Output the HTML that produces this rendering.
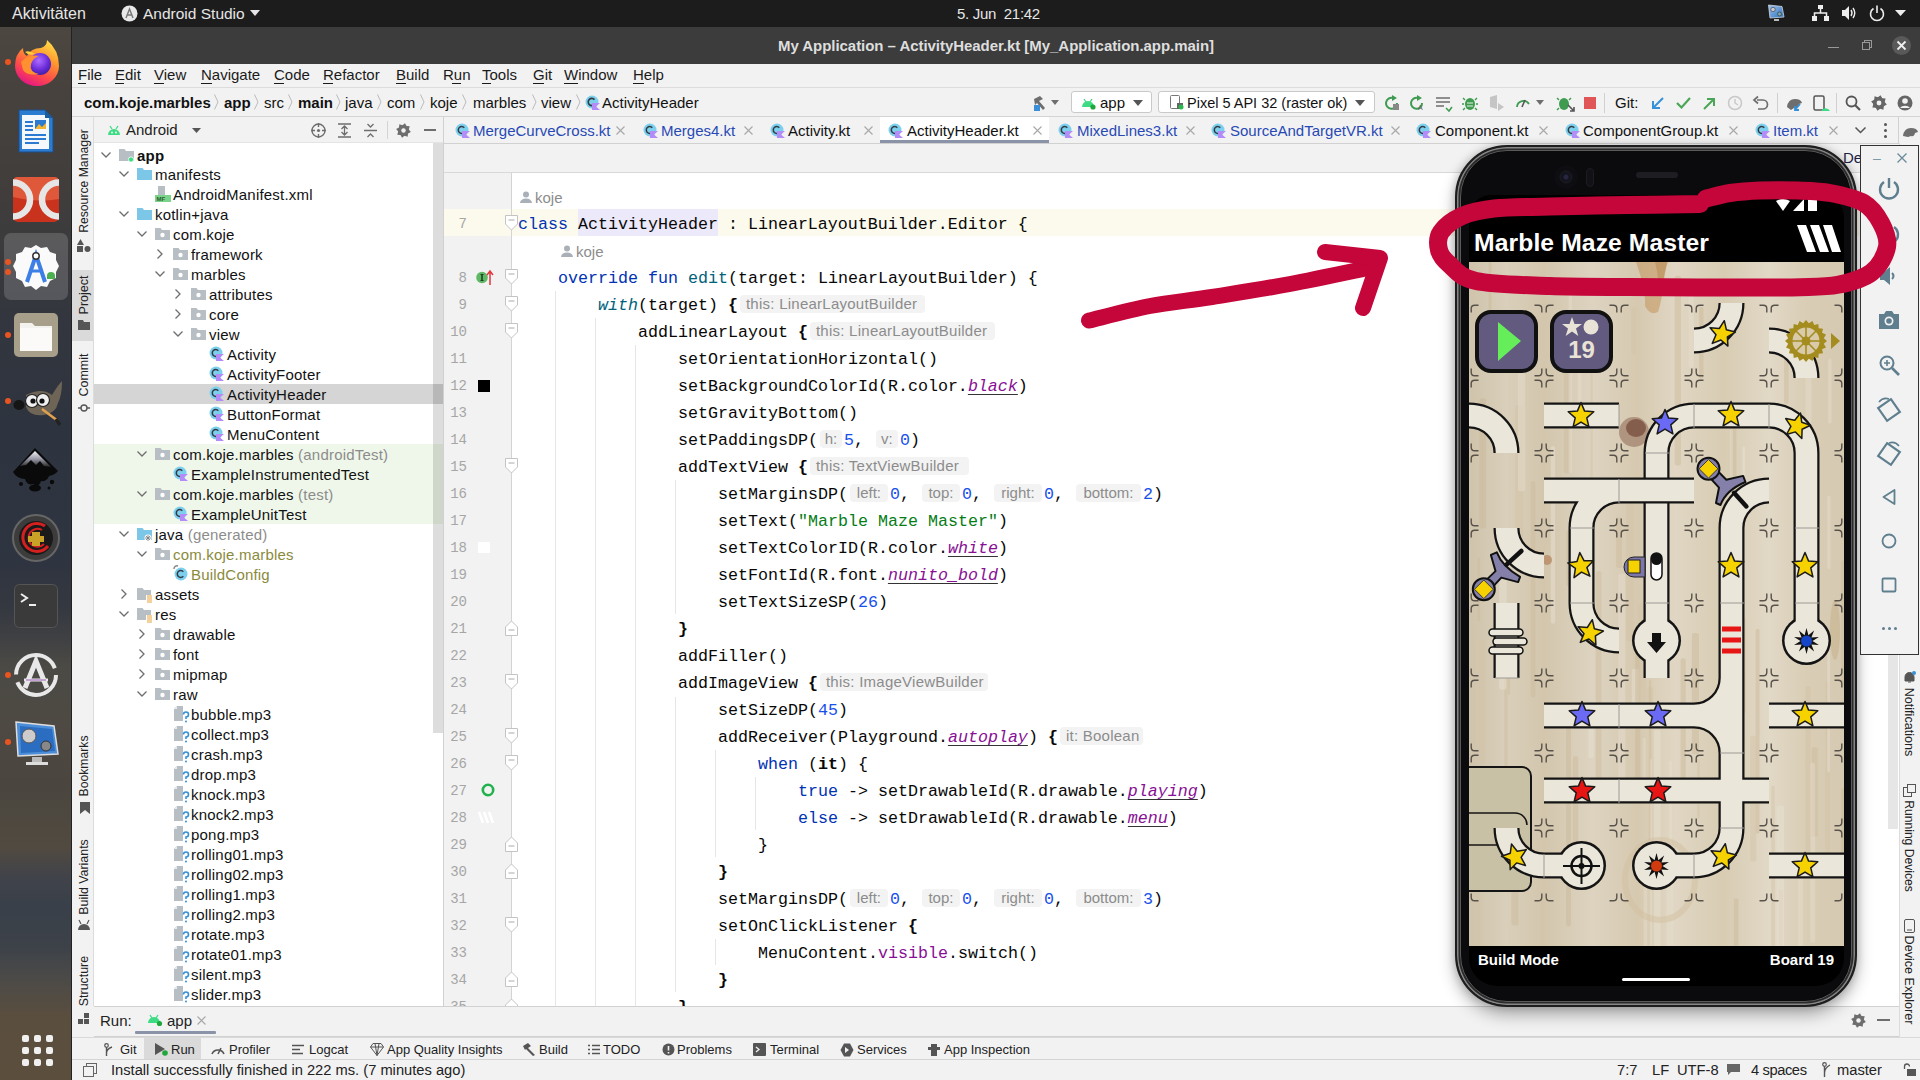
<!DOCTYPE html><html><head><meta charset="utf-8"><style>
html,body{margin:0;padding:0;width:1920px;height:1080px;overflow:hidden;background:#f2f2f2;position:relative;font-family:"Liberation Sans",sans-serif}
div{box-sizing:border-box}
svg{overflow:visible}
</style></head><body>
<div style="position:absolute;left:0px;top:0px;width:1920px;height:27px;background:#1c1c1c"></div>
<div style="position:absolute;left:12px;top:3.5px;height:20px;line-height:20px;font-family:'Liberation Sans', sans-serif;font-size:16px;color:#e6e6e6;font-weight:400;white-space:pre;">Aktivitäten</div>
<svg style="position:absolute;left:121px;top:5px;" width="17" height="17" viewBox="0 0 17 17"><circle cx="8.5" cy="8.5" r="8" fill="#e8e8e8"/><path d="M5 13 L8.5 4 L12 13 M6.3 10 H10.7" stroke="#777" stroke-width="1.4" fill="none"/></svg>
<div style="position:absolute;left:143px;top:3.5px;height:20px;line-height:20px;font-family:'Liberation Sans', sans-serif;font-size:15.5px;color:#e6e6e6;font-weight:400;white-space:pre;">Android Studio</div>
<svg style="position:absolute;left:250px;top:10px;" width="10" height="6" viewBox="0 0 10 6"><path d="M0 0 H10 L5 6 Z" fill="#e6e6e6"/></svg>
<div style="position:absolute;left:957px;top:3.5px;height:20px;line-height:20px;font-family:'Liberation Sans', sans-serif;font-size:15px;color:#e6e6e6;font-weight:400;white-space:pre;letter-spacing:-0.3px">5. Jun  21:42</div>
<svg style="position:absolute;left:1768px;top:4px;" width="17" height="18" viewBox="0 0 17 18"><defs><linearGradient id="tr1" x1="0" y1="0" x2="1" y2="1"><stop offset="0" stop-color="#9cc4ee"/><stop offset="1" stop-color="#2f6fc0"/></linearGradient></defs><path d="M0.5 1 L14 2.5 L16 13 L2 14 Z" fill="url(#tr1)" stroke="#cfd8e0" stroke-width="0.8"/><circle cx="5" cy="5.5" r="2.2" fill="#ccc" stroke="#333" stroke-width="0.6"/><circle cx="11.5" cy="10" r="2" fill="#7aa" stroke="#333" stroke-width="0.6"/><rect x="6" y="15" width="5" height="2" fill="#bbb"/></svg>
<svg style="position:absolute;left:1812px;top:5px;" width="17" height="16" viewBox="0 0 17 16"><rect x="6" y="0" width="5" height="4" fill="#eee"/><rect x="0" y="11" width="5" height="5" fill="#eee"/><rect x="12" y="11" width="5" height="5" fill="#eee"/><path d="M8.5 4 V8 M2.5 11 V8 H14.5 V11" stroke="#eee" stroke-width="1.5" fill="none"/></svg>
<svg style="position:absolute;left:1841px;top:5px;" width="16" height="16" viewBox="0 0 16 16"><path d="M1 5 H4 L8 1 V15 L4 11 H1 Z" fill="#eee"/><path d="M10 5 Q12 8 10 11 M12 3 Q15.5 8 12 13" stroke="#eee" stroke-width="1.4" fill="none"/></svg>
<svg style="position:absolute;left:1869px;top:5px;" width="16" height="16" viewBox="0 0 16 16"><path d="M4.5 3.5 A6.5 6.5 0 1 0 11.5 3.5" stroke="#eee" stroke-width="1.6" fill="none"/><path d="M8 0.5 V8" stroke="#eee" stroke-width="1.6"/></svg>
<svg style="position:absolute;left:1895px;top:10px;" width="11" height="6" viewBox="0 0 11 6"><path d="M0 0 H11 L5.5 6 Z" fill="#eee"/></svg>
<div style="position:absolute;left:0px;top:27px;width:72px;height:1053px;background:linear-gradient(180deg,#4d4741 0px,#47423d 60px,#403d3c 170px,#3a3a3d 230px,#33363e 290px,#2e343f 400px,#2e3440 530px,#343840 580px,#3f4043 610px,#4b4a45 640px,#4e4a43 700px,#4a463f 760px,#514a40 820px,#41434a 850px,#394049 880px,#3d4249 920px,#4b4a48 950px,#5a4e3e 990px,#5b4e3d 1053px)"></div>
<div style="position:absolute;left:71px;top:27px;width:1px;height:1053px;background:#222"></div>
<div style="position:absolute;left:4px;top:233px;width:64px;height:67px;background:rgba(255,255,255,0.16);border-radius:7px"></div>
<div style="position:absolute;left:5px;top:59px;width:6px;height:6px;background:#e95420;border-radius:3px"></div>
<div style="position:absolute;left:5px;top:259px;width:6px;height:6px;background:#e95420;border-radius:3px"></div>
<div style="position:absolute;left:5px;top:269px;width:6px;height:6px;background:#e95420;border-radius:3px"></div>
<div style="position:absolute;left:5px;top:332px;width:6px;height:6px;background:#e95420;border-radius:3px"></div>
<div style="position:absolute;left:5px;top:398px;width:6px;height:6px;background:#e95420;border-radius:3px"></div>
<div style="position:absolute;left:5px;top:672px;width:6px;height:6px;background:#e95420;border-radius:3px"></div>
<div style="position:absolute;left:5px;top:739px;width:6px;height:6px;background:#e95420;border-radius:3px"></div>
<svg style="position:absolute;left:13px;top:38px;" width="48" height="48" viewBox="0 0 48 48"><defs><radialGradient id="ff1" cx="0.45" cy="0.35" r="0.7"><stop offset="0" stop-color="#b06cff"/><stop offset="0.6" stop-color="#6a2cd8"/><stop offset="1" stop-color="#3b1da0"/></radialGradient>
<linearGradient id="ff2" x1="0.8" y1="0" x2="0.3" y2="1"><stop offset="0" stop-color="#ffe14a"/><stop offset="0.35" stop-color="#ff9a2e"/><stop offset="0.7" stop-color="#ff4a4a"/><stop offset="1" stop-color="#e31587"/></linearGradient></defs>
<path d="M34 2 Q46 12 46 28 A22 20 0 0 1 2 28 Q2 16 10 10 Q10 16 14 18 Q18 10 28 10 Q34 8 34 2 Z" fill="url(#ff2)"/>
<circle cx="27" cy="26" r="11" fill="url(#ff1)"/>
<path d="M8 24 Q16 16 26 18 Q20 20 18 26 Q16 34 26 36 Q14 38 10 32 Z" fill="#ff9030"/>
<path d="M12 14 Q16 18 22 16 Q16 12 12 14 Z" fill="#ffcf40"/></svg>
<svg style="position:absolute;left:17px;top:108px;" width="38" height="46" viewBox="0 0 38 46"><path d="M2 2 H28 L36 10 V44 H2 Z" fill="#2b7bd0" stroke="#1c4f8a" stroke-width="1"/><rect x="5" y="7" width="27" height="34" fill="#f4f8fc"/><path d="M28 2 L36 10 H28 Z" fill="#1c5d9f"/><path d="M8 14 H16 M8 18 H16 M8 22 H16 M8 27 H29 M8 31 H29 M8 35 H22" stroke="#2b7bd0" stroke-width="2"/><rect x="18" y="12" width="11" height="9" fill="#2b7bd0"/><path d="M18 21 L22 16 L25 19 L29 15 V21 Z" fill="#f2b630"/></svg>
<svg style="position:absolute;left:13px;top:177px;" width="46" height="45" viewBox="0 0 46 45"><rect x="0" y="0" width="46" height="45" rx="5" fill="#c9321c"/><path d="M0 5 Q0 0 5 0 H41 Q46 0 46 5 V22 Q23 26 0 20 Z" fill="#e0583a"/><path d="M0 5.5 A17 17 0 0 1 0 39.5" stroke="#e6e6e6" stroke-width="6.5" fill="none"/><path d="M46 5.5 A17 17 0 0 0 46 39.5" stroke="#e6e6e6" stroke-width="6.5" fill="none"/></svg>
<svg style="position:absolute;left:13px;top:244px;" width="46" height="46" viewBox="0 0 46 46"><path d="M23 1 L28 4 L34 3 L37 8 L43 10 L43 16 L46 22 L43 28 L43 34 L37 37 L34 43 L28 42 L23 46 L18 42 L12 43 L9 37 L3 34 L3 28 L0 22 L3 16 L3 10 L9 8 L12 3 L18 4 Z" fill="#fafafa"/><path d="M14 38 L23 11 L32 38" stroke="#3d7fe6" stroke-width="4" fill="none"/><path d="M16 27 H30" stroke="#3d7fe6" stroke-width="3"/><circle cx="23" cy="12" r="3.2" fill="#fff" stroke="#333" stroke-width="1.5"/><path d="M34 32 a4 4 0 0 1 8 0 v3 h-8z" fill="#4caf50"/></svg>
<svg style="position:absolute;left:14px;top:313px;" width="44" height="44" viewBox="0 0 44 44"><rect x="0" y="0" width="44" height="44" rx="5" fill="#a89f8a"/><path d="M6 10 H18 L21 13 H38 V38 H6 Z" fill="#f4f2ee"/><rect x="6" y="15" width="32" height="23" fill="#fbfaf8"/></svg>
<svg style="position:absolute;left:12px;top:381px;" width="50" height="44" viewBox="0 0 50 44"><path d="M14 14 Q30 6 40 14 Q46 4 50 0 Q50 14 46 22 Q44 32 32 34 Q18 36 14 26 Z" fill="#6e6556"/>
<circle cx="20" cy="20" r="6.5" fill="#f0f0f0" stroke="#222" stroke-width="1.2"/><circle cx="31" cy="19" r="6.5" fill="#f0f0f0" stroke="#222" stroke-width="1.2"/>
<circle cx="21" cy="20" r="2.6" fill="#111"/><circle cx="30" cy="20" r="2.6" fill="#111"/>
<ellipse cx="7" cy="24" rx="5.5" ry="5" fill="#151515"/><path d="M30 28 L46 40" stroke="#e0a050" stroke-width="2.6"/><path d="M44 38 L48 44" stroke="#222" stroke-width="3.4"/></svg>
<svg style="position:absolute;left:11px;top:446px;" width="50" height="48" viewBox="0 0 50 48"><defs><linearGradient id="ink1" x1="0" y1="0" x2="0" y2="1"><stop offset="0" stop-color="#f4f4f8"/><stop offset="0.5" stop-color="#9a9aa8"/><stop offset="1" stop-color="#222"/></linearGradient></defs>
<path d="M24 2 L47 25 Q44 29 38 30 Q36 36 30 35 Q28 42 22 38 Q16 40 14 33 Q6 33 2 26 Z" fill="#0a0a0a"/>
<path d="M24 5 L40 21 L33 20 L29 15 L25 19 L20 14 L15 19 L9 20 Z" fill="url(#ink1)"/>
<ellipse cx="24" cy="42" rx="6" ry="3.5" fill="#0a0a0a"/><circle cx="10" cy="38" r="2" fill="#0a0a0a"/><circle cx="41" cy="36" r="2.2" fill="#0a0a0a"/><circle cx="38" cy="42" r="1.5" fill="#0a0a0a"/></svg>
<svg style="position:absolute;left:12px;top:514px;" width="48" height="48" viewBox="0 0 48 48"><circle cx="24" cy="24" r="23" fill="#3c3c3c" stroke="#666" stroke-width="2"/><circle cx="24" cy="24" r="17" fill="#1a1a1a"/><path d="M33 12 A14 14 0 1 0 36 32" stroke="#d61f1f" stroke-width="3" fill="none"/><path d="M30 16 A9 9 0 1 0 32 30" stroke="#d61f1f" stroke-width="2" fill="none"/><path d="M20 18 H28 V22 H32 V28 H28 V32 H20 V28 H16 V22 H20 Z" fill="#c9a227"/></svg>
<svg style="position:absolute;left:14px;top:584px;" width="44" height="44" viewBox="0 0 44 44"><rect x="0.5" y="0.5" width="43" height="43" rx="5" fill="#3a3a3a" stroke="#555"/><path d="M7 10 L13 14 L7 18" stroke="#eee" stroke-width="2" fill="none"/><path d="M15 21 H22" stroke="#eee" stroke-width="2"/></svg>
<svg style="position:absolute;left:13px;top:652px;" width="46" height="46" viewBox="0 0 46 46"><circle cx="23" cy="23" r="20" fill="none" stroke="#e8e8e8" stroke-width="4" stroke-dasharray="55 8 55 8"/><path d="M12 36 L23 9 L34 36" stroke="#e8e8e8" stroke-width="5" fill="none"/><path d="M11 28 H35" stroke="#e8e8e8" stroke-width="3"/><path d="M13 28 H33" stroke="#a05cc0" stroke-width="1"/></svg>
<svg style="position:absolute;left:14px;top:720px;" width="46" height="46" viewBox="0 0 46 46"><path d="M2 2 L40 6 L44 34 L4 36 Z" fill="#4d8ed8" stroke="#ddd" stroke-width="1.5"/><path d="M6 6 L38 9 L41 31 L7 33 Z" fill="#2b6dc0"/><circle cx="15" cy="16" r="7" fill="#ccc" stroke="#555"/><circle cx="32" cy="26" r="5" fill="#888" stroke="#333"/><rect x="18" y="37" width="10" height="6" fill="#bbb"/><rect x="12" y="42" width="22" height="3" fill="#ddd"/></svg>
<div style="position:absolute;left:22px;top:1035px;width:7px;height:7px;background:#f0f0f0;border-radius:2px"></div>
<div style="position:absolute;left:22px;top:1047px;width:7px;height:7px;background:#f0f0f0;border-radius:2px"></div>
<div style="position:absolute;left:22px;top:1059px;width:7px;height:7px;background:#f0f0f0;border-radius:2px"></div>
<div style="position:absolute;left:34px;top:1035px;width:7px;height:7px;background:#f0f0f0;border-radius:2px"></div>
<div style="position:absolute;left:34px;top:1047px;width:7px;height:7px;background:#f0f0f0;border-radius:2px"></div>
<div style="position:absolute;left:34px;top:1059px;width:7px;height:7px;background:#f0f0f0;border-radius:2px"></div>
<div style="position:absolute;left:46px;top:1035px;width:7px;height:7px;background:#f0f0f0;border-radius:2px"></div>
<div style="position:absolute;left:46px;top:1047px;width:7px;height:7px;background:#f0f0f0;border-radius:2px"></div>
<div style="position:absolute;left:46px;top:1059px;width:7px;height:7px;background:#f0f0f0;border-radius:2px"></div>
<div style="position:absolute;left:72px;top:27px;width:1848px;height:37px;background:#3c3c3c"></div>
<div style="position:absolute;left:778px;top:35.5px;height:20px;line-height:20px;font-family:'Liberation Sans', sans-serif;font-size:15px;color:#dedede;font-weight:700;white-space:pre;letter-spacing:-0.05px">My Application – ActivityHeader.kt [My_Application.app.main]</div>
<div style="position:absolute;left:1828px;top:47px;width:11px;height:1px;background:#999"></div>
<svg style="position:absolute;left:1862px;top:40px;" width="10" height="10" viewBox="0 0 10 10"><rect x="2.5" y="0.5" width="7" height="7" fill="none" stroke="#999"/><rect x="0.5" y="2.5" width="7" height="7" fill="#3c3c3c" stroke="#999"/></svg>
<svg style="position:absolute;left:1892px;top:36px;" width="19" height="19" viewBox="0 0 19 19"><circle cx="9.5" cy="9.5" r="9.5" fill="#595959"/><path d="M5.5 5.5 L13.5 13.5 M13.5 5.5 L5.5 13.5" stroke="#f0f0f0" stroke-width="1.8"/></svg>
<div style="position:absolute;left:72px;top:64px;width:1848px;height:24px;background:#f2f2f2"></div>
<div style="position:absolute;left:72px;top:87px;width:1848px;height:1px;background:#dcdcdc"></div>
<div style="position:absolute;left:78px;top:65.0px;height:20px;line-height:20px;font-family:'Liberation Sans', sans-serif;font-size:15px;color:#1a1a1a;font-weight:400;white-space:pre;">File</div>
<div style="position:absolute;left:78px;top:83px;width:8px;height:1px;background:#1a1a1a"></div>
<div style="position:absolute;left:115px;top:65.0px;height:20px;line-height:20px;font-family:'Liberation Sans', sans-serif;font-size:15px;color:#1a1a1a;font-weight:400;white-space:pre;">Edit</div>
<div style="position:absolute;left:115px;top:83px;width:9px;height:1px;background:#1a1a1a"></div>
<div style="position:absolute;left:154px;top:65.0px;height:20px;line-height:20px;font-family:'Liberation Sans', sans-serif;font-size:15px;color:#1a1a1a;font-weight:400;white-space:pre;">View</div>
<div style="position:absolute;left:154px;top:83px;width:10px;height:1px;background:#1a1a1a"></div>
<div style="position:absolute;left:201px;top:65.0px;height:20px;line-height:20px;font-family:'Liberation Sans', sans-serif;font-size:15px;color:#1a1a1a;font-weight:400;white-space:pre;">Navigate</div>
<div style="position:absolute;left:201px;top:83px;width:11px;height:1px;background:#1a1a1a"></div>
<div style="position:absolute;left:274px;top:65.0px;height:20px;line-height:20px;font-family:'Liberation Sans', sans-serif;font-size:15px;color:#1a1a1a;font-weight:400;white-space:pre;">Code</div>
<div style="position:absolute;left:274px;top:83px;width:10px;height:1px;background:#1a1a1a"></div>
<div style="position:absolute;left:323px;top:65.0px;height:20px;line-height:20px;font-family:'Liberation Sans', sans-serif;font-size:15px;color:#1a1a1a;font-weight:400;white-space:pre;">Refactor</div>
<div style="position:absolute;left:323px;top:83px;width:10px;height:1px;background:#1a1a1a"></div>
<div style="position:absolute;left:396px;top:65.0px;height:20px;line-height:20px;font-family:'Liberation Sans', sans-serif;font-size:15px;color:#1a1a1a;font-weight:400;white-space:pre;">Build</div>
<div style="position:absolute;left:396px;top:83px;width:10px;height:1px;background:#1a1a1a"></div>
<div style="position:absolute;left:443px;top:65.0px;height:20px;line-height:20px;font-family:'Liberation Sans', sans-serif;font-size:15px;color:#1a1a1a;font-weight:400;white-space:pre;">Run</div>
<div style="position:absolute;left:452px;top:83px;width:9px;height:1px;background:#1a1a1a"></div>
<div style="position:absolute;left:482px;top:65.0px;height:20px;line-height:20px;font-family:'Liberation Sans', sans-serif;font-size:15px;color:#1a1a1a;font-weight:400;white-space:pre;">Tools</div>
<div style="position:absolute;left:482px;top:83px;width:9px;height:1px;background:#1a1a1a"></div>
<div style="position:absolute;left:533px;top:65.0px;height:20px;line-height:20px;font-family:'Liberation Sans', sans-serif;font-size:15px;color:#1a1a1a;font-weight:400;white-space:pre;">Git</div>
<div style="position:absolute;left:533px;top:83px;width:11px;height:1px;background:#1a1a1a"></div>
<div style="position:absolute;left:564px;top:65.0px;height:20px;line-height:20px;font-family:'Liberation Sans', sans-serif;font-size:15px;color:#1a1a1a;font-weight:400;white-space:pre;">Window</div>
<div style="position:absolute;left:564px;top:83px;width:14px;height:1px;background:#1a1a1a"></div>
<div style="position:absolute;left:633px;top:65.0px;height:20px;line-height:20px;font-family:'Liberation Sans', sans-serif;font-size:15px;color:#1a1a1a;font-weight:400;white-space:pre;">Help</div>
<div style="position:absolute;left:633px;top:83px;width:11px;height:1px;background:#1a1a1a"></div>
<div style="position:absolute;left:72px;top:88px;width:1848px;height:29px;background:#f2f2f2"></div>
<div style="position:absolute;left:72px;top:116px;width:1848px;height:1px;background:#d4d4d4"></div>
<div style="position:absolute;left:84px;top:92.5px;height:20px;line-height:20px;font-family:'Liberation Sans', sans-serif;font-size:15px;color:#111;font-weight:700;white-space:pre;">com.koje.marbles</div>
<div style="position:absolute;left:224px;top:92.5px;height:20px;line-height:20px;font-family:'Liberation Sans', sans-serif;font-size:15px;color:#111;font-weight:700;white-space:pre;">app</div>
<div style="position:absolute;left:264px;top:92.5px;height:20px;line-height:20px;font-family:'Liberation Sans', sans-serif;font-size:15px;color:#111;font-weight:400;white-space:pre;">src</div>
<div style="position:absolute;left:298px;top:92.5px;height:20px;line-height:20px;font-family:'Liberation Sans', sans-serif;font-size:15px;color:#111;font-weight:700;white-space:pre;">main</div>
<div style="position:absolute;left:345px;top:92.5px;height:20px;line-height:20px;font-family:'Liberation Sans', sans-serif;font-size:15px;color:#111;font-weight:400;white-space:pre;">java</div>
<div style="position:absolute;left:387px;top:92.5px;height:20px;line-height:20px;font-family:'Liberation Sans', sans-serif;font-size:15px;color:#111;font-weight:400;white-space:pre;">com</div>
<div style="position:absolute;left:430px;top:92.5px;height:20px;line-height:20px;font-family:'Liberation Sans', sans-serif;font-size:15px;color:#111;font-weight:400;white-space:pre;">koje</div>
<div style="position:absolute;left:473px;top:92.5px;height:20px;line-height:20px;font-family:'Liberation Sans', sans-serif;font-size:15px;color:#111;font-weight:400;white-space:pre;">marbles</div>
<div style="position:absolute;left:541px;top:92.5px;height:20px;line-height:20px;font-family:'Liberation Sans', sans-serif;font-size:15px;color:#111;font-weight:400;white-space:pre;">view</div>
<svg style="position:absolute;left:214px;top:94px;" width="5" height="16" viewBox="0 0 5 16"><path d="M0.5 0.5 L4 8 L0.5 15.5" stroke="#bbb" fill="none"/></svg>
<svg style="position:absolute;left:254px;top:94px;" width="5" height="16" viewBox="0 0 5 16"><path d="M0.5 0.5 L4 8 L0.5 15.5" stroke="#bbb" fill="none"/></svg>
<svg style="position:absolute;left:288px;top:94px;" width="5" height="16" viewBox="0 0 5 16"><path d="M0.5 0.5 L4 8 L0.5 15.5" stroke="#bbb" fill="none"/></svg>
<svg style="position:absolute;left:336px;top:94px;" width="5" height="16" viewBox="0 0 5 16"><path d="M0.5 0.5 L4 8 L0.5 15.5" stroke="#bbb" fill="none"/></svg>
<svg style="position:absolute;left:377px;top:94px;" width="5" height="16" viewBox="0 0 5 16"><path d="M0.5 0.5 L4 8 L0.5 15.5" stroke="#bbb" fill="none"/></svg>
<svg style="position:absolute;left:420px;top:94px;" width="5" height="16" viewBox="0 0 5 16"><path d="M0.5 0.5 L4 8 L0.5 15.5" stroke="#bbb" fill="none"/></svg>
<svg style="position:absolute;left:462px;top:94px;" width="5" height="16" viewBox="0 0 5 16"><path d="M0.5 0.5 L4 8 L0.5 15.5" stroke="#bbb" fill="none"/></svg>
<svg style="position:absolute;left:532px;top:94px;" width="5" height="16" viewBox="0 0 5 16"><path d="M0.5 0.5 L4 8 L0.5 15.5" stroke="#bbb" fill="none"/></svg>
<svg style="position:absolute;left:576px;top:94px;" width="5" height="16" viewBox="0 0 5 16"><path d="M0.5 0.5 L4 8 L0.5 15.5" stroke="#bbb" fill="none"/></svg>
<svg style="position:absolute;left:585px;top:95px;" width="15" height="15" viewBox="0 0 15 15"><circle cx="7" cy="7" r="6.5" fill="#7dcfee"/><path d="M9.5 4.6 A3.6 3.6 0 1 0 9.5 9.4" stroke="#333c44" stroke-width="1.6" fill="none"/><path d="M7 8 H15 L11 11.5 L15 15 H7 Z" fill="#b48cf8"/></svg>
<div style="position:absolute;left:602px;top:92.5px;height:20px;line-height:20px;font-family:'Liberation Sans', sans-serif;font-size:15px;color:#111;font-weight:400;white-space:pre;">ActivityHeader</div>
<svg style="position:absolute;left:1030px;top:94px;" width="18" height="18" viewBox="0 0 18 18"><path d="M4 5 L10 2 L13 5 L9 7 L15 14 L13 16 L7 9 L5 11 Z" fill="#6e6e6e"/><rect x="4" y="11" width="6" height="6" fill="#3b8fd8"/></svg>
<svg style="position:absolute;left:1051px;top:100px;" width="8" height="5" viewBox="0 0 8 5"><path d="M0 0 H8 L4 5Z" fill="#6e6e6e"/></svg>
<div style="position:absolute;left:1071px;top:91px;width:81px;height:22px;background:#fff;border:1px solid #c9c9c9;border-radius:3px"></div>
<svg style="position:absolute;left:1081px;top:96px;" width="14" height="12" viewBox="0 0 14 12"><path d="M1 11 A6 6 0 0 1 13 11 Z" fill="#3ddc84"/><path d="M3 3 L5 6 M11 3 L9 6" stroke="#3ddc84" stroke-width="1.3"/><circle cx="12" cy="11" r="2.6" fill="#1ea83c"/></svg>
<div style="position:absolute;left:1100px;top:92.5px;height:20px;line-height:20px;font-family:'Liberation Sans', sans-serif;font-size:15px;color:#111;font-weight:400;white-space:pre;">app</div>
<svg style="position:absolute;left:1133px;top:100px;" width="10" height="6" viewBox="0 0 10 6"><path d="M0 0 H10 L5 6Z" fill="#555"/></svg>
<div style="position:absolute;left:1158px;top:91px;width:217px;height:22px;background:#fff;border:1px solid #c9c9c9;border-radius:3px"></div>
<svg style="position:absolute;left:1170px;top:95px;" width="14" height="15" viewBox="0 0 14 15"><rect x="0.5" y="0.5" width="9" height="13" rx="1" fill="none" stroke="#777"/><rect x="7" y="8" width="6" height="6" fill="#666"/><circle cx="11" cy="12" r="2.5" fill="#2db84c"/></svg>
<div style="position:absolute;left:1187px;top:92.5px;height:20px;line-height:20px;font-family:'Liberation Sans', sans-serif;font-size:14.5px;color:#111;font-weight:400;white-space:pre;">Pixel 5 API 32 (raster ok)</div>
<svg style="position:absolute;left:1355px;top:100px;" width="10" height="6" viewBox="0 0 10 6"><path d="M0 0 H10 L5 6Z" fill="#555"/></svg>
<svg style="position:absolute;left:1384px;top:95px;" width="16" height="16" viewBox="0 0 16 16"><path d="M13 8 A5.5 5.5 0 1 1 9 3" stroke="#3e9b4f" stroke-width="2" fill="none"/><path d="M8 0 L13 3 L8 6 Z" fill="#3e9b4f"/><rect x="9" y="9" width="6" height="6" fill="#888"/></svg>
<svg style="position:absolute;left:1409px;top:95px;" width="16" height="16" viewBox="0 0 16 16"><path d="M13 8 A5.5 5.5 0 1 1 9 3" stroke="#3e9b4f" stroke-width="2" fill="none"/><path d="M8 0 L13 3 L8 6 Z" fill="#3e9b4f"/><text x="9" y="15" font-size="7" fill="#666" font-family="Liberation Sans">A</text></svg>
<svg style="position:absolute;left:1436px;top:96px;" width="16" height="15" viewBox="0 0 16 15"><path d="M0 2 H14 M0 6 H14 M0 10 H8" stroke="#6e6e6e" stroke-width="1.6"/><path d="M10 12 L13 15 L16 11" stroke="#3e9b4f" stroke-width="1.5" fill="none"/></svg>
<svg style="position:absolute;left:1463px;top:95px;" width="14" height="16" viewBox="0 0 14 16"><ellipse cx="7" cy="9" rx="5" ry="6" fill="#3e9b4f"/><path d="M2 5 L0 3 M12 5 L14 3 M1 9 H-1 M13 9 H15 M2 13 L0 15 M12 13 L14 15" stroke="#3e9b4f" stroke-width="1.4"/><path d="M4 8 H10 M4 11 H10" stroke="#e9f5ea" stroke-width="1"/></svg>
<svg style="position:absolute;left:1489px;top:95px;" width="16" height="16" viewBox="0 0 16 16"><path d="M1 2 L8 0 V14 L1 12 Z" fill="#c5c5c5"/><path d="M9 8 L15 12 L9 16 Z" fill="#c5c5c5"/></svg>
<svg style="position:absolute;left:1515px;top:96px;" width="16" height="12" viewBox="0 0 16 12"><path d="M2 11 A6.5 6.5 0 0 1 14 8" stroke="#3e9b4f" stroke-width="1.8" fill="none"/><path d="M7 11 L10 4" stroke="#555" stroke-width="1.6"/></svg>
<svg style="position:absolute;left:1536px;top:100px;" width="8" height="5" viewBox="0 0 8 5"><path d="M0 0 H8 L4 5Z" fill="#6e6e6e"/></svg>
<svg style="position:absolute;left:1557px;top:95px;" width="18" height="17" viewBox="0 0 18 17"><ellipse cx="7" cy="9" rx="5" ry="6" fill="#3e9b4f"/><path d="M2 5 L0 3 M12 5 L14 3 M2 13 L0 15" stroke="#3e9b4f" stroke-width="1.4"/><path d="M11 10 L17 16 M13 16 H17 V12" stroke="#555" stroke-width="1.6" fill="none"/></svg>
<div style="position:absolute;left:1584px;top:97px;width:12px;height:12px;background:#e05555"></div>
<div style="position:absolute;left:1604px;top:93px;width:1px;height:20px;background:#d0d0d0"></div>
<div style="position:absolute;left:1615px;top:92.5px;height:20px;line-height:20px;font-family:'Liberation Sans', sans-serif;font-size:15px;color:#111;font-weight:400;white-space:pre;">Git:</div>
<svg style="position:absolute;left:1650px;top:96px;" width="15" height="15" viewBox="0 0 15 15"><path d="M13 2 L3 12 M3 5 V12 H10" stroke="#3592d8" stroke-width="2" fill="none"/></svg>
<svg style="position:absolute;left:1676px;top:96px;" width="15" height="13" viewBox="0 0 15 13"><path d="M1 7 L5.5 11.5 L14 2" stroke="#4aa657" stroke-width="2.2" fill="none"/></svg>
<svg style="position:absolute;left:1702px;top:96px;" width="15" height="15" viewBox="0 0 15 15"><path d="M2 13 L12 3 M5 3 H12 V10" stroke="#4aa657" stroke-width="2" fill="none"/></svg>
<svg style="position:absolute;left:1727px;top:95px;" width="16" height="16" viewBox="0 0 16 16"><circle cx="8" cy="8" r="6.5" stroke="#c8c8c8" stroke-width="1.5" fill="none"/><path d="M8 4 V8 L11 10" stroke="#c8c8c8" stroke-width="1.4" fill="none"/></svg>
<svg style="position:absolute;left:1753px;top:96px;" width="16" height="14" viewBox="0 0 16 14"><path d="M4 4 H10 A4.5 4.5 0 0 1 10 13 H5" stroke="#6e6e6e" stroke-width="1.7" fill="none"/><path d="M5 0.5 L1 4 L5 7.5" stroke="#6e6e6e" stroke-width="1.7" fill="none"/></svg>
<div style="position:absolute;left:1777px;top:93px;width:1px;height:20px;background:#d0d0d0"></div>
<svg style="position:absolute;left:1786px;top:95px;" width="18" height="17" viewBox="0 0 18 17"><path d="M1 12 Q2 4 9 4 Q15 4 16 8 L13 9 Q12 14 8 13 L5 15 Z" fill="#6e6e6e"/><path d="M14 9 L9 15 M9 11 V15 H13" stroke="#3592d8" stroke-width="1.8" fill="none"/></svg>
<svg style="position:absolute;left:1813px;top:95px;" width="16" height="17" viewBox="0 0 16 17"><rect x="1" y="1" width="10" height="14" rx="1.5" fill="none" stroke="#555" stroke-width="1.5"/><path d="M8 16 A5 5 0 0 1 17 16 Z" fill="#3ddc84"/></svg>
<div style="position:absolute;left:1836px;top:93px;width:1px;height:20px;background:#d0d0d0"></div>
<svg style="position:absolute;left:1845px;top:95px;" width="16" height="16" viewBox="0 0 16 16"><circle cx="6.5" cy="6.5" r="5" stroke="#555" stroke-width="1.8" fill="none"/><path d="M10 10 L15 15" stroke="#555" stroke-width="2.2"/></svg>
<svg style="position:absolute;left:1871px;top:95px;" width="16" height="16" viewBox="0 0 16 16"><polygon points="15.85,9.56 12.79,11.20 12.44,14.65 9.12,13.65 6.44,15.85 4.80,12.79 1.35,12.44 2.35,9.12 0.15,6.44 3.21,4.80 3.56,1.35 6.88,2.35 9.56,0.15 11.20,3.21 14.65,3.56 13.65,6.88" fill="#666"/><circle cx="8.0" cy="8.0" r="5.76" fill="#666"/><circle cx="8.0" cy="8.0" r="2.4" fill="#f2f2f2"/></svg>
<svg style="position:absolute;left:1897px;top:95px;" width="16" height="16" viewBox="0 0 16 16"><circle cx="8" cy="8" r="7.5" fill="#666"/><circle cx="8" cy="6" r="2.8" fill="#f2f2f2"/><path d="M3 13 A5.5 4 0 0 1 13 13" fill="#f2f2f2"/></svg>
<div style="position:absolute;left:72px;top:117px;width:22px;height:921px;background:#f2f2f2"></div>
<div style="position:absolute;left:93px;top:117px;width:1px;height:889px;background:#dcdcdc"></div>
<div style="position:absolute;left:72px;top:270px;width:21px;height:71px;background:#dadada"></div>
<div style="position:absolute;left:84px;top:181px;width:0;height:0"><div style="position:absolute;left:0;top:0;transform:translate(-50%,-50%) rotate(-90deg);font-family:'Liberation Sans', sans-serif;font-size:12.2px;line-height:16px;color:#222;white-space:pre">Resource Manager</div></div>
<svg style="position:absolute;left:77px;top:239px;" width="14" height="13" viewBox="0 0 14 13"><path d="M3.5 0 L7 6 H0 Z" fill="#555"/><rect x="0" y="7" width="6" height="6" fill="#555"/><circle cx="10.5" cy="10" r="3" fill="#555"/></svg>
<div style="position:absolute;left:84px;top:295px;width:0;height:0"><div style="position:absolute;left:0;top:0;transform:translate(-50%,-50%) rotate(-90deg);font-family:'Liberation Sans', sans-serif;font-size:12.5px;line-height:16px;color:#222;white-space:pre">Project</div></div>
<svg style="position:absolute;left:78px;top:320px;" width="12" height="10" viewBox="0 0 12 10"><path d="M0 0 H5 L6 2 H12 V10 H0 Z" fill="#555"/></svg>
<div style="position:absolute;left:84px;top:375px;width:0;height:0"><div style="position:absolute;left:0;top:0;transform:translate(-50%,-50%) rotate(-90deg);font-family:'Liberation Sans', sans-serif;font-size:12.5px;line-height:16px;color:#222;white-space:pre">Commit</div></div>
<svg style="position:absolute;left:78px;top:402px;" width="12" height="12" viewBox="0 0 12 12"><circle cx="6" cy="6" r="3" fill="none" stroke="#555" stroke-width="1.4"/><path d="M0 6 H3 M9 6 H12" stroke="#555" stroke-width="1.4"/></svg>
<div style="position:absolute;left:84px;top:766px;width:0;height:0"><div style="position:absolute;left:0;top:0;transform:translate(-50%,-50%) rotate(-90deg);font-family:'Liberation Sans', sans-serif;font-size:12.2px;line-height:16px;color:#222;white-space:pre">Bookmarks</div></div>
<svg style="position:absolute;left:79px;top:802px;" width="10" height="11" viewBox="0 0 10 11"><path d="M1 0 H11 V12 L6 8 L1 12 Z" fill="#555"/></svg>
<div style="position:absolute;left:84px;top:877px;width:0;height:0"><div style="position:absolute;left:0;top:0;transform:translate(-50%,-50%) rotate(-90deg);font-family:'Liberation Sans', sans-serif;font-size:12.4px;line-height:16px;color:#222;white-space:pre">Build Variants</div></div>
<svg style="position:absolute;left:77px;top:920px;" width="14" height="10" viewBox="0 0 14 10"><path d="M1 10 A6 6 0 0 1 13 10 Z" fill="#555"/><path d="M2 0 L4 4 M12 0 L10 4" stroke="#555" stroke-width="1.2"/></svg>
<div style="position:absolute;left:84px;top:981px;width:0;height:0"><div style="position:absolute;left:0;top:0;transform:translate(-50%,-50%) rotate(-90deg);font-family:'Liberation Sans', sans-serif;font-size:12.4px;line-height:16px;color:#222;white-space:pre">Structure</div></div>
<svg style="position:absolute;left:78px;top:1013px;" width="12" height="12" viewBox="0 0 12 12"><rect x="6" y="0" width="5" height="5" fill="#555"/><rect x="0" y="6" width="5" height="5" fill="#555"/><rect x="6" y="6" width="5" height="5" fill="#555"/></svg>
<div style="position:absolute;left:94px;top:117px;width:349px;height:26px;background:#f2f2f2"></div>
<div style="position:absolute;left:94px;top:142px;width:349px;height:1px;background:#e4e4e4"></div>
<svg style="position:absolute;left:107px;top:125px;" width="14" height="10" viewBox="0 0 14 10"><path d="M1 10 A6 6 0 0 1 13 10 Z" fill="#3ddc84"/><path d="M3 1 L5 4 M11 1 L9 4" stroke="#3ddc84" stroke-width="1.3"/><circle cx="5" cy="7.5" r="0.9" fill="#fff"/><circle cx="9" cy="7.5" r="0.9" fill="#fff"/></svg>
<div style="position:absolute;left:126px;top:120.0px;height:20px;line-height:20px;font-family:'Liberation Sans', sans-serif;font-size:15px;color:#222;font-weight:400;white-space:pre;">Android</div>
<svg style="position:absolute;left:192px;top:128px;" width="9" height="5" viewBox="0 0 9 5"><path d="M0 0 H9 L4.5 5Z" fill="#555"/></svg>
<svg style="position:absolute;left:311px;top:123px;" width="15" height="15" viewBox="0 0 15 15"><circle cx="7.5" cy="7.5" r="6.5" fill="none" stroke="#6e6e6e" stroke-width="1.4"/><circle cx="7.5" cy="7.5" r="1.6" fill="#6e6e6e"/><path d="M7.5 0 V4 M7.5 11 V15 M0 7.5 H4 M11 7.5 H15" stroke="#6e6e6e" stroke-width="1.4"/></svg>
<svg style="position:absolute;left:338px;top:123px;" width="13" height="15" viewBox="0 0 13 15"><path d="M0 1 H13 M0 14 H13" stroke="#6e6e6e" stroke-width="1.5"/><path d="M3.5 6 L6.5 3 L9.5 6 M3.5 9 L6.5 12 L9.5 9 M6.5 3 V12" stroke="#6e6e6e" stroke-width="1.3" fill="none"/></svg>
<svg style="position:absolute;left:364px;top:123px;" width="13" height="15" viewBox="0 0 13 15"><path d="M0 7.5 H13" stroke="#6e6e6e" stroke-width="1.5"/><path d="M3.5 1 L6.5 4 L9.5 1 M3.5 14 L6.5 11 L9.5 14" stroke="#6e6e6e" stroke-width="1.3" fill="none"/></svg>
<div style="position:absolute;left:387px;top:121px;width:1px;height:18px;background:#d4d4d4"></div>
<svg style="position:absolute;left:396px;top:123px;" width="15" height="15" viewBox="0 0 15 15"><polygon points="14.86,8.96 11.99,10.50 11.67,13.74 8.55,12.80 6.04,14.86 4.50,11.99 1.26,11.67 2.20,8.55 0.14,6.04 3.01,4.50 3.33,1.26 6.45,2.20 8.96,0.14 10.50,3.01 13.74,3.33 12.80,6.45" fill="#6e6e6e"/><circle cx="7.5" cy="7.5" r="5.3999999999999995" fill="#6e6e6e"/><circle cx="7.5" cy="7.5" r="2.25" fill="#f2f2f2"/></svg>
<div style="position:absolute;left:424px;top:129px;width:12px;height:2px;background:#6e6e6e"></div>
<div style="position:absolute;left:94px;top:143px;width:349px;height:863px;background:#ffffff"></div>
<div style="position:absolute;left:94px;top:384px;width:349px;height:20px;background:#d5d5d5"></div>
<div style="position:absolute;left:94px;top:444px;width:349px;height:80px;background:#eff7ea"></div>
<div style="position:absolute;left:433px;top:143px;width:10px;height:590px;background:rgba(0,0,0,0.135)"></div>
<svg style="position:absolute;left:101px;top:152px;" width="10" height="6" viewBox="0 0 10 6"><path d="M0.5 0.5 L5 5 L9.5 0.5" stroke="#6e6e6e" stroke-width="1.3" fill="none"/></svg>
<svg style="position:absolute;left:119px;top:148px;" width="15" height="14" viewBox="0 0 15 14"><path d="M0 1 H5.5 L7 3 H15 V13 H0 Z" fill="#b7bec4"/><circle cx="12" cy="11.5" r="2.6" fill="#3ddc84" stroke="#fff" stroke-width="0.8"/></svg>
<div style="position:absolute;left:137px;top:146.0px;height:20px;line-height:20px;font-family:'Liberation Sans', sans-serif;font-size:15px;color:#111;font-weight:700;white-space:pre;letter-spacing:0.2px">app</div>
<svg style="position:absolute;left:119px;top:171px;" width="10" height="6" viewBox="0 0 10 6"><path d="M0.5 0.5 L5 5 L9.5 0.5" stroke="#6e6e6e" stroke-width="1.3" fill="none"/></svg>
<svg style="position:absolute;left:137px;top:167px;" width="15" height="13" viewBox="0 0 15 13"><path d="M0 1 H5.5 L7 3 H15 V13 H0 Z" fill="#7cc6e8"/></svg>
<div style="position:absolute;left:155px;top:165.0px;height:20px;line-height:20px;font-family:'Liberation Sans', sans-serif;font-size:15px;color:#111;font-weight:400;white-space:pre;letter-spacing:0.2px">manifests</div>
<svg style="position:absolute;left:155px;top:186px;" width="16" height="16" viewBox="0 0 16 16"><path d="M3 0 H10 V9 H3 Z" fill="#b7bec4"/><rect x="0" y="9" width="16" height="7" fill="#7bd389"/><text x="1.5" y="15.2" font-size="6" font-family="Liberation Sans" fill="#2b5e34" font-weight="700">MF</text></svg>
<div style="position:absolute;left:173px;top:185.0px;height:20px;line-height:20px;font-family:'Liberation Sans', sans-serif;font-size:15px;color:#111;font-weight:400;white-space:pre;letter-spacing:0.2px">AndroidManifest.xml</div>
<svg style="position:absolute;left:119px;top:211px;" width="10" height="6" viewBox="0 0 10 6"><path d="M0.5 0.5 L5 5 L9.5 0.5" stroke="#6e6e6e" stroke-width="1.3" fill="none"/></svg>
<svg style="position:absolute;left:137px;top:207px;" width="15" height="13" viewBox="0 0 15 13"><path d="M0 1 H5.5 L7 3 H15 V13 H0 Z" fill="#7cc6e8"/></svg>
<div style="position:absolute;left:155px;top:205.0px;height:20px;line-height:20px;font-family:'Liberation Sans', sans-serif;font-size:15px;color:#111;font-weight:400;white-space:pre;letter-spacing:0.2px">kotlin+java</div>
<svg style="position:absolute;left:137px;top:231px;" width="10" height="6" viewBox="0 0 10 6"><path d="M0.5 0.5 L5 5 L9.5 0.5" stroke="#6e6e6e" stroke-width="1.3" fill="none"/></svg>
<svg style="position:absolute;left:155px;top:227px;" width="15" height="13" viewBox="0 0 15 13"><path d="M0 1 H5.5 L7 3 H15 V13 H0 Z" fill="#b7bec4"/><circle cx="7.5" cy="8" r="2.2" fill="#fff"/></svg>
<div style="position:absolute;left:173px;top:225.0px;height:20px;line-height:20px;font-family:'Liberation Sans', sans-serif;font-size:15px;color:#111;font-weight:400;white-space:pre;letter-spacing:0.2px">com.koje</div>
<svg style="position:absolute;left:157px;top:249px;" width="6" height="10" viewBox="0 0 6 10"><path d="M0.5 0.5 L5 5 L0.5 9.5" stroke="#6e6e6e" stroke-width="1.3" fill="none"/></svg>
<svg style="position:absolute;left:173px;top:247px;" width="15" height="13" viewBox="0 0 15 13"><path d="M0 1 H5.5 L7 3 H15 V13 H0 Z" fill="#b7bec4"/><circle cx="7.5" cy="8" r="2.2" fill="#fff"/></svg>
<div style="position:absolute;left:191px;top:245.0px;height:20px;line-height:20px;font-family:'Liberation Sans', sans-serif;font-size:15px;color:#111;font-weight:400;white-space:pre;letter-spacing:0.2px">framework</div>
<svg style="position:absolute;left:155px;top:271px;" width="10" height="6" viewBox="0 0 10 6"><path d="M0.5 0.5 L5 5 L9.5 0.5" stroke="#6e6e6e" stroke-width="1.3" fill="none"/></svg>
<svg style="position:absolute;left:173px;top:267px;" width="15" height="13" viewBox="0 0 15 13"><path d="M0 1 H5.5 L7 3 H15 V13 H0 Z" fill="#b7bec4"/><circle cx="7.5" cy="8" r="2.2" fill="#fff"/></svg>
<div style="position:absolute;left:191px;top:265.0px;height:20px;line-height:20px;font-family:'Liberation Sans', sans-serif;font-size:15px;color:#111;font-weight:400;white-space:pre;letter-spacing:0.2px">marbles</div>
<svg style="position:absolute;left:175px;top:289px;" width="6" height="10" viewBox="0 0 6 10"><path d="M0.5 0.5 L5 5 L0.5 9.5" stroke="#6e6e6e" stroke-width="1.3" fill="none"/></svg>
<svg style="position:absolute;left:191px;top:287px;" width="15" height="13" viewBox="0 0 15 13"><path d="M0 1 H5.5 L7 3 H15 V13 H0 Z" fill="#b7bec4"/><circle cx="7.5" cy="8" r="2.2" fill="#fff"/></svg>
<div style="position:absolute;left:209px;top:285.0px;height:20px;line-height:20px;font-family:'Liberation Sans', sans-serif;font-size:15px;color:#111;font-weight:400;white-space:pre;letter-spacing:0.2px">attributes</div>
<svg style="position:absolute;left:175px;top:309px;" width="6" height="10" viewBox="0 0 6 10"><path d="M0.5 0.5 L5 5 L0.5 9.5" stroke="#6e6e6e" stroke-width="1.3" fill="none"/></svg>
<svg style="position:absolute;left:191px;top:307px;" width="15" height="13" viewBox="0 0 15 13"><path d="M0 1 H5.5 L7 3 H15 V13 H0 Z" fill="#b7bec4"/><circle cx="7.5" cy="8" r="2.2" fill="#fff"/></svg>
<div style="position:absolute;left:209px;top:305.0px;height:20px;line-height:20px;font-family:'Liberation Sans', sans-serif;font-size:15px;color:#111;font-weight:400;white-space:pre;letter-spacing:0.2px">core</div>
<svg style="position:absolute;left:173px;top:331px;" width="10" height="6" viewBox="0 0 10 6"><path d="M0.5 0.5 L5 5 L9.5 0.5" stroke="#6e6e6e" stroke-width="1.3" fill="none"/></svg>
<svg style="position:absolute;left:191px;top:327px;" width="15" height="13" viewBox="0 0 15 13"><path d="M0 1 H5.5 L7 3 H15 V13 H0 Z" fill="#b7bec4"/><circle cx="7.5" cy="8" r="2.2" fill="#fff"/></svg>
<div style="position:absolute;left:209px;top:325.0px;height:20px;line-height:20px;font-family:'Liberation Sans', sans-serif;font-size:15px;color:#111;font-weight:400;white-space:pre;letter-spacing:0.2px">view</div>
<svg style="position:absolute;left:209px;top:346px;" width="15" height="15" viewBox="0 0 15 15"><circle cx="7" cy="7" r="6.5" fill="#7dcfee"/><path d="M9.3 4.8 A3.4 3.4 0 1 0 9.3 9.2" stroke="#333c44" stroke-width="1.5" fill="none"/><path d="M7 8 H15 L11 11.5 L15 15 H7 Z" fill="#b48cf8"/></svg>
<div style="position:absolute;left:227px;top:345.0px;height:20px;line-height:20px;font-family:'Liberation Sans', sans-serif;font-size:15px;color:#111;font-weight:400;white-space:pre;letter-spacing:0.2px">Activity</div>
<svg style="position:absolute;left:209px;top:366px;" width="15" height="15" viewBox="0 0 15 15"><circle cx="7" cy="7" r="6.5" fill="#7dcfee"/><path d="M9.3 4.8 A3.4 3.4 0 1 0 9.3 9.2" stroke="#333c44" stroke-width="1.5" fill="none"/><path d="M7 8 H15 L11 11.5 L15 15 H7 Z" fill="#b48cf8"/></svg>
<div style="position:absolute;left:227px;top:365.0px;height:20px;line-height:20px;font-family:'Liberation Sans', sans-serif;font-size:15px;color:#111;font-weight:400;white-space:pre;letter-spacing:0.2px">ActivityFooter</div>
<svg style="position:absolute;left:209px;top:386px;" width="15" height="15" viewBox="0 0 15 15"><circle cx="7" cy="7" r="6.5" fill="#7dcfee"/><path d="M9.3 4.8 A3.4 3.4 0 1 0 9.3 9.2" stroke="#333c44" stroke-width="1.5" fill="none"/><path d="M7 8 H15 L11 11.5 L15 15 H7 Z" fill="#b48cf8"/></svg>
<div style="position:absolute;left:227px;top:385.0px;height:20px;line-height:20px;font-family:'Liberation Sans', sans-serif;font-size:15px;color:#111;font-weight:400;white-space:pre;letter-spacing:0.2px">ActivityHeader</div>
<svg style="position:absolute;left:209px;top:406px;" width="15" height="15" viewBox="0 0 15 15"><circle cx="7" cy="7" r="6.5" fill="#7dcfee"/><path d="M9.3 4.8 A3.4 3.4 0 1 0 9.3 9.2" stroke="#333c44" stroke-width="1.5" fill="none"/><path d="M7 8 H15 L11 11.5 L15 15 H7 Z" fill="#b48cf8"/></svg>
<div style="position:absolute;left:227px;top:405.0px;height:20px;line-height:20px;font-family:'Liberation Sans', sans-serif;font-size:15px;color:#111;font-weight:400;white-space:pre;letter-spacing:0.2px">ButtonFormat</div>
<svg style="position:absolute;left:209px;top:426px;" width="15" height="15" viewBox="0 0 15 15"><circle cx="7" cy="7" r="6.5" fill="#7dcfee"/><path d="M9.3 4.8 A3.4 3.4 0 1 0 9.3 9.2" stroke="#333c44" stroke-width="1.5" fill="none"/><path d="M7 8 H15 L11 11.5 L15 15 H7 Z" fill="#b48cf8"/></svg>
<div style="position:absolute;left:227px;top:425.0px;height:20px;line-height:20px;font-family:'Liberation Sans', sans-serif;font-size:15px;color:#111;font-weight:400;white-space:pre;letter-spacing:0.2px">MenuContent</div>
<svg style="position:absolute;left:137px;top:451px;" width="10" height="6" viewBox="0 0 10 6"><path d="M0.5 0.5 L5 5 L9.5 0.5" stroke="#6e6e6e" stroke-width="1.3" fill="none"/></svg>
<svg style="position:absolute;left:155px;top:447px;" width="15" height="13" viewBox="0 0 15 13"><path d="M0 1 H5.5 L7 3 H15 V13 H0 Z" fill="#b7bec4"/><circle cx="7.5" cy="8" r="2.2" fill="#fff"/></svg>
<div style="position:absolute;left:173px;top:445.0px;height:20px;line-height:20px;font-family:'Liberation Sans', sans-serif;font-size:15px;color:#111;font-weight:400;white-space:pre;letter-spacing:0.2px">com.koje.marbles <span style="color:#8c8c8c">(androidTest)</span></div>
<svg style="position:absolute;left:173px;top:466px;" width="15" height="15" viewBox="0 0 15 15"><circle cx="7" cy="7" r="6.5" fill="#7dcfee"/><path d="M9.3 4.8 A3.4 3.4 0 1 0 9.3 9.2" stroke="#333c44" stroke-width="1.5" fill="none"/><path d="M7 8 H15 L11 11.5 L15 15 H7 Z" fill="#b48cf8"/></svg>
<div style="position:absolute;left:191px;top:465.0px;height:20px;line-height:20px;font-family:'Liberation Sans', sans-serif;font-size:15px;color:#111;font-weight:400;white-space:pre;letter-spacing:0.2px">ExampleInstrumentedTest</div>
<svg style="position:absolute;left:137px;top:491px;" width="10" height="6" viewBox="0 0 10 6"><path d="M0.5 0.5 L5 5 L9.5 0.5" stroke="#6e6e6e" stroke-width="1.3" fill="none"/></svg>
<svg style="position:absolute;left:155px;top:487px;" width="15" height="13" viewBox="0 0 15 13"><path d="M0 1 H5.5 L7 3 H15 V13 H0 Z" fill="#b7bec4"/><circle cx="7.5" cy="8" r="2.2" fill="#fff"/></svg>
<div style="position:absolute;left:173px;top:485.0px;height:20px;line-height:20px;font-family:'Liberation Sans', sans-serif;font-size:15px;color:#111;font-weight:400;white-space:pre;letter-spacing:0.2px">com.koje.marbles <span style="color:#8c8c8c">(test)</span></div>
<svg style="position:absolute;left:173px;top:506px;" width="15" height="15" viewBox="0 0 15 15"><circle cx="7" cy="7" r="6.5" fill="#7dcfee"/><path d="M9.3 4.8 A3.4 3.4 0 1 0 9.3 9.2" stroke="#333c44" stroke-width="1.5" fill="none"/><path d="M7 8 H15 L11 11.5 L15 15 H7 Z" fill="#b48cf8"/></svg>
<div style="position:absolute;left:191px;top:505.0px;height:20px;line-height:20px;font-family:'Liberation Sans', sans-serif;font-size:15px;color:#111;font-weight:400;white-space:pre;letter-spacing:0.2px">ExampleUnitTest</div>
<svg style="position:absolute;left:119px;top:531px;" width="10" height="6" viewBox="0 0 10 6"><path d="M0.5 0.5 L5 5 L9.5 0.5" stroke="#6e6e6e" stroke-width="1.3" fill="none"/></svg>
<svg style="position:absolute;left:137px;top:527px;" width="16" height="15" viewBox="0 0 16 15"><path d="M0 1 H5.5 L7 3 H15 V13 H0 Z" fill="#7cc6e8"/><circle cx="11" cy="11" r="3.5" fill="#fff"/><path d="M11 8 V14 M8 11 H14 M9 9 L13 13 M13 9 L9 13" stroke="#777" stroke-width="0.8"/></svg>
<div style="position:absolute;left:155px;top:525.0px;height:20px;line-height:20px;font-family:'Liberation Sans', sans-serif;font-size:15px;color:#111;font-weight:400;white-space:pre;letter-spacing:0.2px">java <span style="color:#8c8c8c">(generated)</span></div>
<svg style="position:absolute;left:137px;top:551px;" width="10" height="6" viewBox="0 0 10 6"><path d="M0.5 0.5 L5 5 L9.5 0.5" stroke="#6e6e6e" stroke-width="1.3" fill="none"/></svg>
<svg style="position:absolute;left:155px;top:547px;" width="15" height="13" viewBox="0 0 15 13"><path d="M0 1 H5.5 L7 3 H15 V13 H0 Z" fill="#b7bec4"/><circle cx="7.5" cy="8" r="2.2" fill="#fff"/></svg>
<div style="position:absolute;left:173px;top:545.0px;height:20px;line-height:20px;font-family:'Liberation Sans', sans-serif;font-size:15px;color:#8a8a3c;font-weight:400;white-space:pre;letter-spacing:0.2px">com.koje.marbles</div>
<svg style="position:absolute;left:173px;top:566px;" width="15" height="15" viewBox="0 0 15 15"><circle cx="8" cy="8" r="6.5" fill="#7dcfee"/><path d="M10.3 5.8 A3.4 3.4 0 1 0 10.3 10.2" stroke="#333c44" stroke-width="1.5" fill="none"/><path d="M1 3 A3 3 0 0 1 5 0" stroke="#888" stroke-width="1.5" fill="none"/></svg>
<div style="position:absolute;left:191px;top:565.0px;height:20px;line-height:20px;font-family:'Liberation Sans', sans-serif;font-size:15px;color:#8a8a3c;font-weight:400;white-space:pre;letter-spacing:0.2px">BuildConfig</div>
<svg style="position:absolute;left:121px;top:589px;" width="6" height="10" viewBox="0 0 6 10"><path d="M0.5 0.5 L5 5 L0.5 9.5" stroke="#6e6e6e" stroke-width="1.3" fill="none"/></svg>
<svg style="position:absolute;left:137px;top:587px;" width="16" height="16" viewBox="0 0 16 16"><path d="M0 1 H5.5 L7 3 H14 V8 H9 V13 H0 Z" fill="#b7bec4"/><path d="M10 9 H15 M10 11 H15 M10 13 H15 M10 15 H15" stroke="#e8a23a" stroke-width="1"/></svg>
<div style="position:absolute;left:155px;top:585.0px;height:20px;line-height:20px;font-family:'Liberation Sans', sans-serif;font-size:15px;color:#111;font-weight:400;white-space:pre;letter-spacing:0.2px">assets</div>
<svg style="position:absolute;left:119px;top:611px;" width="10" height="6" viewBox="0 0 10 6"><path d="M0.5 0.5 L5 5 L9.5 0.5" stroke="#6e6e6e" stroke-width="1.3" fill="none"/></svg>
<svg style="position:absolute;left:137px;top:607px;" width="16" height="16" viewBox="0 0 16 16"><path d="M0 1 H5.5 L7 3 H14 V8 H9 V13 H0 Z" fill="#b7bec4"/><path d="M10 9 H15 M10 11 H15 M10 13 H15 M10 15 H15" stroke="#e8a23a" stroke-width="1"/></svg>
<div style="position:absolute;left:155px;top:605.0px;height:20px;line-height:20px;font-family:'Liberation Sans', sans-serif;font-size:15px;color:#111;font-weight:400;white-space:pre;letter-spacing:0.2px">res</div>
<svg style="position:absolute;left:139px;top:629px;" width="6" height="10" viewBox="0 0 6 10"><path d="M0.5 0.5 L5 5 L0.5 9.5" stroke="#6e6e6e" stroke-width="1.3" fill="none"/></svg>
<svg style="position:absolute;left:155px;top:627px;" width="15" height="13" viewBox="0 0 15 13"><path d="M0 1 H5.5 L7 3 H15 V13 H0 Z" fill="#b7bec4"/><circle cx="7.5" cy="8" r="2.2" fill="#fff"/></svg>
<div style="position:absolute;left:173px;top:625.0px;height:20px;line-height:20px;font-family:'Liberation Sans', sans-serif;font-size:15px;color:#111;font-weight:400;white-space:pre;letter-spacing:0.2px">drawable</div>
<svg style="position:absolute;left:139px;top:649px;" width="6" height="10" viewBox="0 0 6 10"><path d="M0.5 0.5 L5 5 L0.5 9.5" stroke="#6e6e6e" stroke-width="1.3" fill="none"/></svg>
<svg style="position:absolute;left:155px;top:647px;" width="15" height="13" viewBox="0 0 15 13"><path d="M0 1 H5.5 L7 3 H15 V13 H0 Z" fill="#b7bec4"/><circle cx="7.5" cy="8" r="2.2" fill="#fff"/></svg>
<div style="position:absolute;left:173px;top:645.0px;height:20px;line-height:20px;font-family:'Liberation Sans', sans-serif;font-size:15px;color:#111;font-weight:400;white-space:pre;letter-spacing:0.2px">font</div>
<svg style="position:absolute;left:139px;top:669px;" width="6" height="10" viewBox="0 0 6 10"><path d="M0.5 0.5 L5 5 L0.5 9.5" stroke="#6e6e6e" stroke-width="1.3" fill="none"/></svg>
<svg style="position:absolute;left:155px;top:667px;" width="15" height="13" viewBox="0 0 15 13"><path d="M0 1 H5.5 L7 3 H15 V13 H0 Z" fill="#b7bec4"/><circle cx="7.5" cy="8" r="2.2" fill="#fff"/></svg>
<div style="position:absolute;left:173px;top:665.0px;height:20px;line-height:20px;font-family:'Liberation Sans', sans-serif;font-size:15px;color:#111;font-weight:400;white-space:pre;letter-spacing:0.2px">mipmap</div>
<svg style="position:absolute;left:137px;top:691px;" width="10" height="6" viewBox="0 0 10 6"><path d="M0.5 0.5 L5 5 L9.5 0.5" stroke="#6e6e6e" stroke-width="1.3" fill="none"/></svg>
<svg style="position:absolute;left:155px;top:687px;" width="15" height="13" viewBox="0 0 15 13"><path d="M0 1 H5.5 L7 3 H15 V13 H0 Z" fill="#b7bec4"/><circle cx="7.5" cy="8" r="2.2" fill="#fff"/></svg>
<div style="position:absolute;left:173px;top:685.0px;height:20px;line-height:20px;font-family:'Liberation Sans', sans-serif;font-size:15px;color:#111;font-weight:400;white-space:pre;letter-spacing:0.2px">raw</div>
<svg style="position:absolute;left:174px;top:706px;" width="16" height="16" viewBox="0 0 16 16"><path d="M0 3 L3 0 H9 V15 H0 Z" fill="#b7bec4"/><path d="M3 0 V3 H0" fill="#e9ecee"/><path d="M9.5 8.5 A2.5 2.5 0 1 1 12 11 V13" stroke="#3592d8" stroke-width="1.6" fill="none"/><circle cx="12" cy="15.5" r="1" fill="#3592d8"/></svg>
<div style="position:absolute;left:191px;top:705.0px;height:20px;line-height:20px;font-family:'Liberation Sans', sans-serif;font-size:15px;color:#111;font-weight:400;white-space:pre;letter-spacing:0.2px">bubble.mp3</div>
<svg style="position:absolute;left:174px;top:726px;" width="16" height="16" viewBox="0 0 16 16"><path d="M0 3 L3 0 H9 V15 H0 Z" fill="#b7bec4"/><path d="M3 0 V3 H0" fill="#e9ecee"/><path d="M9.5 8.5 A2.5 2.5 0 1 1 12 11 V13" stroke="#3592d8" stroke-width="1.6" fill="none"/><circle cx="12" cy="15.5" r="1" fill="#3592d8"/></svg>
<div style="position:absolute;left:191px;top:725.0px;height:20px;line-height:20px;font-family:'Liberation Sans', sans-serif;font-size:15px;color:#111;font-weight:400;white-space:pre;letter-spacing:0.2px">collect.mp3</div>
<svg style="position:absolute;left:174px;top:746px;" width="16" height="16" viewBox="0 0 16 16"><path d="M0 3 L3 0 H9 V15 H0 Z" fill="#b7bec4"/><path d="M3 0 V3 H0" fill="#e9ecee"/><path d="M9.5 8.5 A2.5 2.5 0 1 1 12 11 V13" stroke="#3592d8" stroke-width="1.6" fill="none"/><circle cx="12" cy="15.5" r="1" fill="#3592d8"/></svg>
<div style="position:absolute;left:191px;top:745.0px;height:20px;line-height:20px;font-family:'Liberation Sans', sans-serif;font-size:15px;color:#111;font-weight:400;white-space:pre;letter-spacing:0.2px">crash.mp3</div>
<svg style="position:absolute;left:174px;top:766px;" width="16" height="16" viewBox="0 0 16 16"><path d="M0 3 L3 0 H9 V15 H0 Z" fill="#b7bec4"/><path d="M3 0 V3 H0" fill="#e9ecee"/><path d="M9.5 8.5 A2.5 2.5 0 1 1 12 11 V13" stroke="#3592d8" stroke-width="1.6" fill="none"/><circle cx="12" cy="15.5" r="1" fill="#3592d8"/></svg>
<div style="position:absolute;left:191px;top:765.0px;height:20px;line-height:20px;font-family:'Liberation Sans', sans-serif;font-size:15px;color:#111;font-weight:400;white-space:pre;letter-spacing:0.2px">drop.mp3</div>
<svg style="position:absolute;left:174px;top:786px;" width="16" height="16" viewBox="0 0 16 16"><path d="M0 3 L3 0 H9 V15 H0 Z" fill="#b7bec4"/><path d="M3 0 V3 H0" fill="#e9ecee"/><path d="M9.5 8.5 A2.5 2.5 0 1 1 12 11 V13" stroke="#3592d8" stroke-width="1.6" fill="none"/><circle cx="12" cy="15.5" r="1" fill="#3592d8"/></svg>
<div style="position:absolute;left:191px;top:785.0px;height:20px;line-height:20px;font-family:'Liberation Sans', sans-serif;font-size:15px;color:#111;font-weight:400;white-space:pre;letter-spacing:0.2px">knock.mp3</div>
<svg style="position:absolute;left:174px;top:806px;" width="16" height="16" viewBox="0 0 16 16"><path d="M0 3 L3 0 H9 V15 H0 Z" fill="#b7bec4"/><path d="M3 0 V3 H0" fill="#e9ecee"/><path d="M9.5 8.5 A2.5 2.5 0 1 1 12 11 V13" stroke="#3592d8" stroke-width="1.6" fill="none"/><circle cx="12" cy="15.5" r="1" fill="#3592d8"/></svg>
<div style="position:absolute;left:191px;top:805.0px;height:20px;line-height:20px;font-family:'Liberation Sans', sans-serif;font-size:15px;color:#111;font-weight:400;white-space:pre;letter-spacing:0.2px">knock2.mp3</div>
<svg style="position:absolute;left:174px;top:826px;" width="16" height="16" viewBox="0 0 16 16"><path d="M0 3 L3 0 H9 V15 H0 Z" fill="#b7bec4"/><path d="M3 0 V3 H0" fill="#e9ecee"/><path d="M9.5 8.5 A2.5 2.5 0 1 1 12 11 V13" stroke="#3592d8" stroke-width="1.6" fill="none"/><circle cx="12" cy="15.5" r="1" fill="#3592d8"/></svg>
<div style="position:absolute;left:191px;top:825.0px;height:20px;line-height:20px;font-family:'Liberation Sans', sans-serif;font-size:15px;color:#111;font-weight:400;white-space:pre;letter-spacing:0.2px">pong.mp3</div>
<svg style="position:absolute;left:174px;top:846px;" width="16" height="16" viewBox="0 0 16 16"><path d="M0 3 L3 0 H9 V15 H0 Z" fill="#b7bec4"/><path d="M3 0 V3 H0" fill="#e9ecee"/><path d="M9.5 8.5 A2.5 2.5 0 1 1 12 11 V13" stroke="#3592d8" stroke-width="1.6" fill="none"/><circle cx="12" cy="15.5" r="1" fill="#3592d8"/></svg>
<div style="position:absolute;left:191px;top:845.0px;height:20px;line-height:20px;font-family:'Liberation Sans', sans-serif;font-size:15px;color:#111;font-weight:400;white-space:pre;letter-spacing:0.2px">rolling01.mp3</div>
<svg style="position:absolute;left:174px;top:866px;" width="16" height="16" viewBox="0 0 16 16"><path d="M0 3 L3 0 H9 V15 H0 Z" fill="#b7bec4"/><path d="M3 0 V3 H0" fill="#e9ecee"/><path d="M9.5 8.5 A2.5 2.5 0 1 1 12 11 V13" stroke="#3592d8" stroke-width="1.6" fill="none"/><circle cx="12" cy="15.5" r="1" fill="#3592d8"/></svg>
<div style="position:absolute;left:191px;top:865.0px;height:20px;line-height:20px;font-family:'Liberation Sans', sans-serif;font-size:15px;color:#111;font-weight:400;white-space:pre;letter-spacing:0.2px">rolling02.mp3</div>
<svg style="position:absolute;left:174px;top:886px;" width="16" height="16" viewBox="0 0 16 16"><path d="M0 3 L3 0 H9 V15 H0 Z" fill="#b7bec4"/><path d="M3 0 V3 H0" fill="#e9ecee"/><path d="M9.5 8.5 A2.5 2.5 0 1 1 12 11 V13" stroke="#3592d8" stroke-width="1.6" fill="none"/><circle cx="12" cy="15.5" r="1" fill="#3592d8"/></svg>
<div style="position:absolute;left:191px;top:885.0px;height:20px;line-height:20px;font-family:'Liberation Sans', sans-serif;font-size:15px;color:#111;font-weight:400;white-space:pre;letter-spacing:0.2px">rolling1.mp3</div>
<svg style="position:absolute;left:174px;top:906px;" width="16" height="16" viewBox="0 0 16 16"><path d="M0 3 L3 0 H9 V15 H0 Z" fill="#b7bec4"/><path d="M3 0 V3 H0" fill="#e9ecee"/><path d="M9.5 8.5 A2.5 2.5 0 1 1 12 11 V13" stroke="#3592d8" stroke-width="1.6" fill="none"/><circle cx="12" cy="15.5" r="1" fill="#3592d8"/></svg>
<div style="position:absolute;left:191px;top:905.0px;height:20px;line-height:20px;font-family:'Liberation Sans', sans-serif;font-size:15px;color:#111;font-weight:400;white-space:pre;letter-spacing:0.2px">rolling2.mp3</div>
<svg style="position:absolute;left:174px;top:926px;" width="16" height="16" viewBox="0 0 16 16"><path d="M0 3 L3 0 H9 V15 H0 Z" fill="#b7bec4"/><path d="M3 0 V3 H0" fill="#e9ecee"/><path d="M9.5 8.5 A2.5 2.5 0 1 1 12 11 V13" stroke="#3592d8" stroke-width="1.6" fill="none"/><circle cx="12" cy="15.5" r="1" fill="#3592d8"/></svg>
<div style="position:absolute;left:191px;top:925.0px;height:20px;line-height:20px;font-family:'Liberation Sans', sans-serif;font-size:15px;color:#111;font-weight:400;white-space:pre;letter-spacing:0.2px">rotate.mp3</div>
<svg style="position:absolute;left:174px;top:946px;" width="16" height="16" viewBox="0 0 16 16"><path d="M0 3 L3 0 H9 V15 H0 Z" fill="#b7bec4"/><path d="M3 0 V3 H0" fill="#e9ecee"/><path d="M9.5 8.5 A2.5 2.5 0 1 1 12 11 V13" stroke="#3592d8" stroke-width="1.6" fill="none"/><circle cx="12" cy="15.5" r="1" fill="#3592d8"/></svg>
<div style="position:absolute;left:191px;top:945.0px;height:20px;line-height:20px;font-family:'Liberation Sans', sans-serif;font-size:15px;color:#111;font-weight:400;white-space:pre;letter-spacing:0.2px">rotate01.mp3</div>
<svg style="position:absolute;left:174px;top:966px;" width="16" height="16" viewBox="0 0 16 16"><path d="M0 3 L3 0 H9 V15 H0 Z" fill="#b7bec4"/><path d="M3 0 V3 H0" fill="#e9ecee"/><path d="M9.5 8.5 A2.5 2.5 0 1 1 12 11 V13" stroke="#3592d8" stroke-width="1.6" fill="none"/><circle cx="12" cy="15.5" r="1" fill="#3592d8"/></svg>
<div style="position:absolute;left:191px;top:965.0px;height:20px;line-height:20px;font-family:'Liberation Sans', sans-serif;font-size:15px;color:#111;font-weight:400;white-space:pre;letter-spacing:0.2px">silent.mp3</div>
<svg style="position:absolute;left:174px;top:986px;" width="16" height="16" viewBox="0 0 16 16"><path d="M0 3 L3 0 H9 V15 H0 Z" fill="#b7bec4"/><path d="M3 0 V3 H0" fill="#e9ecee"/><path d="M9.5 8.5 A2.5 2.5 0 1 1 12 11 V13" stroke="#3592d8" stroke-width="1.6" fill="none"/><circle cx="12" cy="15.5" r="1" fill="#3592d8"/></svg>
<div style="position:absolute;left:191px;top:985.0px;height:20px;line-height:20px;font-family:'Liberation Sans', sans-serif;font-size:15px;color:#111;font-weight:400;white-space:pre;letter-spacing:0.2px">slider.mp3</div>
<div style="position:absolute;left:444px;top:117px;width:1455px;height:26px;background:#f2f2f2"></div>
<div style="position:absolute;left:444px;top:143px;width:1455px;height:1px;background:#d1d1d1"></div>
<div style="position:absolute;left:880px;top:117px;width:169px;height:26px;background:#ffffff"></div>
<div style="position:absolute;left:880px;top:140px;width:169px;height:3px;background:#8a93a8"></div>
<svg style="position:absolute;left:455px;top:123px;" width="15" height="15" viewBox="0 0 15 15"><circle cx="7" cy="7" r="6.5" fill="#7dcfee"/><path d="M9.3 4.8 A3.4 3.4 0 1 0 9.3 9.2" stroke="#333c44" stroke-width="1.5" fill="none"/><path d="M7 8 H15 L11 11.5 L15 15 H7 Z" fill="#b48cf8"/></svg>
<div style="position:absolute;left:473px;top:120.5px;height:20px;line-height:20px;font-family:'Liberation Sans', sans-serif;font-size:15px;color:#2849b5;font-weight:400;white-space:pre;">MergeCurveCross.kt</div>
<svg style="position:absolute;left:616px;top:126px;" width="9" height="9" viewBox="0 0 9 9"><path d="M0.5 0.5 L8.5 8.5 M8.5 0.5 L0.5 8.5" stroke="#a8a8a8" stroke-width="1.1"/></svg>
<svg style="position:absolute;left:643px;top:123px;" width="15" height="15" viewBox="0 0 15 15"><circle cx="7" cy="7" r="6.5" fill="#7dcfee"/><path d="M9.3 4.8 A3.4 3.4 0 1 0 9.3 9.2" stroke="#333c44" stroke-width="1.5" fill="none"/><path d="M7 8 H15 L11 11.5 L15 15 H7 Z" fill="#b48cf8"/></svg>
<div style="position:absolute;left:661px;top:120.5px;height:20px;line-height:20px;font-family:'Liberation Sans', sans-serif;font-size:15px;color:#2849b5;font-weight:400;white-space:pre;">Merges4.kt</div>
<svg style="position:absolute;left:744px;top:126px;" width="9" height="9" viewBox="0 0 9 9"><path d="M0.5 0.5 L8.5 8.5 M8.5 0.5 L0.5 8.5" stroke="#a8a8a8" stroke-width="1.1"/></svg>
<svg style="position:absolute;left:770px;top:123px;" width="15" height="15" viewBox="0 0 15 15"><circle cx="7" cy="7" r="6.5" fill="#7dcfee"/><path d="M9.3 4.8 A3.4 3.4 0 1 0 9.3 9.2" stroke="#333c44" stroke-width="1.5" fill="none"/><path d="M7 8 H15 L11 11.5 L15 15 H7 Z" fill="#b48cf8"/></svg>
<div style="position:absolute;left:788px;top:120.5px;height:20px;line-height:20px;font-family:'Liberation Sans', sans-serif;font-size:15px;color:#111;font-weight:400;white-space:pre;">Activity.kt</div>
<svg style="position:absolute;left:864px;top:126px;" width="9" height="9" viewBox="0 0 9 9"><path d="M0.5 0.5 L8.5 8.5 M8.5 0.5 L0.5 8.5" stroke="#a8a8a8" stroke-width="1.1"/></svg>
<svg style="position:absolute;left:888px;top:123px;" width="15" height="15" viewBox="0 0 15 15"><circle cx="7" cy="7" r="6.5" fill="#7dcfee"/><path d="M9.3 4.8 A3.4 3.4 0 1 0 9.3 9.2" stroke="#333c44" stroke-width="1.5" fill="none"/><path d="M7 8 H15 L11 11.5 L15 15 H7 Z" fill="#b48cf8"/></svg>
<div style="position:absolute;left:907px;top:120.5px;height:20px;line-height:20px;font-family:'Liberation Sans', sans-serif;font-size:15px;color:#111;font-weight:400;white-space:pre;">ActivityHeader.kt</div>
<svg style="position:absolute;left:1033px;top:126px;" width="9" height="9" viewBox="0 0 9 9"><path d="M0.5 0.5 L8.5 8.5 M8.5 0.5 L0.5 8.5" stroke="#a8a8a8" stroke-width="1.1"/></svg>
<svg style="position:absolute;left:1058px;top:123px;" width="15" height="15" viewBox="0 0 15 15"><circle cx="7" cy="7" r="6.5" fill="#7dcfee"/><path d="M9.3 4.8 A3.4 3.4 0 1 0 9.3 9.2" stroke="#333c44" stroke-width="1.5" fill="none"/><path d="M7 8 H15 L11 11.5 L15 15 H7 Z" fill="#b48cf8"/></svg>
<div style="position:absolute;left:1077px;top:120.5px;height:20px;line-height:20px;font-family:'Liberation Sans', sans-serif;font-size:15px;color:#2849b5;font-weight:400;white-space:pre;">MixedLines3.kt</div>
<svg style="position:absolute;left:1186px;top:126px;" width="9" height="9" viewBox="0 0 9 9"><path d="M0.5 0.5 L8.5 8.5 M8.5 0.5 L0.5 8.5" stroke="#a8a8a8" stroke-width="1.1"/></svg>
<svg style="position:absolute;left:1211px;top:123px;" width="15" height="15" viewBox="0 0 15 15"><circle cx="7" cy="7" r="6.5" fill="#7dcfee"/><path d="M9.3 4.8 A3.4 3.4 0 1 0 9.3 9.2" stroke="#333c44" stroke-width="1.5" fill="none"/><path d="M7 8 H15 L11 11.5 L15 15 H7 Z" fill="#b48cf8"/></svg>
<div style="position:absolute;left:1230px;top:120.5px;height:20px;line-height:20px;font-family:'Liberation Sans', sans-serif;font-size:15px;color:#2849b5;font-weight:400;white-space:pre;">SourceAndTargetVR.kt</div>
<svg style="position:absolute;left:1391px;top:126px;" width="9" height="9" viewBox="0 0 9 9"><path d="M0.5 0.5 L8.5 8.5 M8.5 0.5 L0.5 8.5" stroke="#a8a8a8" stroke-width="1.1"/></svg>
<svg style="position:absolute;left:1416px;top:123px;" width="15" height="15" viewBox="0 0 15 15"><circle cx="7" cy="7" r="6.5" fill="#7dcfee"/><path d="M9.3 4.8 A3.4 3.4 0 1 0 9.3 9.2" stroke="#333c44" stroke-width="1.5" fill="none"/><path d="M7 8 H15 L11 11.5 L15 15 H7 Z" fill="#b48cf8"/></svg>
<div style="position:absolute;left:1435px;top:120.5px;height:20px;line-height:20px;font-family:'Liberation Sans', sans-serif;font-size:15px;color:#111;font-weight:400;white-space:pre;">Component.kt</div>
<svg style="position:absolute;left:1539px;top:126px;" width="9" height="9" viewBox="0 0 9 9"><path d="M0.5 0.5 L8.5 8.5 M8.5 0.5 L0.5 8.5" stroke="#a8a8a8" stroke-width="1.1"/></svg>
<svg style="position:absolute;left:1565px;top:123px;" width="15" height="15" viewBox="0 0 15 15"><circle cx="7" cy="7" r="6.5" fill="#7dcfee"/><path d="M9.3 4.8 A3.4 3.4 0 1 0 9.3 9.2" stroke="#333c44" stroke-width="1.5" fill="none"/><path d="M7 8 H15 L11 11.5 L15 15 H7 Z" fill="#b48cf8"/></svg>
<div style="position:absolute;left:1583px;top:120.5px;height:20px;line-height:20px;font-family:'Liberation Sans', sans-serif;font-size:15px;color:#111;font-weight:400;white-space:pre;">ComponentGroup.kt</div>
<svg style="position:absolute;left:1729px;top:126px;" width="9" height="9" viewBox="0 0 9 9"><path d="M0.5 0.5 L8.5 8.5 M8.5 0.5 L0.5 8.5" stroke="#a8a8a8" stroke-width="1.1"/></svg>
<svg style="position:absolute;left:1755px;top:123px;" width="15" height="15" viewBox="0 0 15 15"><circle cx="7" cy="7" r="6.5" fill="#7dcfee"/><path d="M9.3 4.8 A3.4 3.4 0 1 0 9.3 9.2" stroke="#333c44" stroke-width="1.5" fill="none"/><path d="M7 8 H15 L11 11.5 L15 15 H7 Z" fill="#b48cf8"/></svg>
<div style="position:absolute;left:1773px;top:120.5px;height:20px;line-height:20px;font-family:'Liberation Sans', sans-serif;font-size:15px;color:#2849b5;font-weight:400;white-space:pre;">Item.kt</div>
<svg style="position:absolute;left:1829px;top:126px;" width="9" height="9" viewBox="0 0 9 9"><path d="M0.5 0.5 L8.5 8.5 M8.5 0.5 L0.5 8.5" stroke="#a8a8a8" stroke-width="1.1"/></svg>
<svg style="position:absolute;left:1855px;top:127px;" width="11" height="7" viewBox="0 0 11 7"><path d="M0.5 0.5 L5.5 5.5 L10.5 0.5" stroke="#555" stroke-width="1.5" fill="none"/></svg>
<div style="position:absolute;left:1884px;top:123px;width:3px;height:3px;background:#555;border-radius:2px"></div>
<div style="position:absolute;left:1884px;top:129px;width:3px;height:3px;background:#555;border-radius:2px"></div>
<div style="position:absolute;left:1884px;top:135px;width:3px;height:3px;background:#555;border-radius:2px"></div>
<div style="position:absolute;left:1898px;top:117px;width:1px;height:26px;background:#d1d1d1"></div>
<svg style="position:absolute;left:1902px;top:124px;" width="17" height="13" viewBox="0 0 17 13"><path d="M1 12 Q2 4 9 4 Q15 4 16 8 L13 9 Q12 13 9 12 L6 13 Z" fill="#6e6e6e"/></svg>
<div style="position:absolute;left:443px;top:117px;width:1px;height:889px;background:#d1d1d1"></div>
<div style="position:absolute;left:444px;top:144px;width:1455px;height:28px;background:#f2f2f2"></div>
<div style="position:absolute;left:444px;top:172px;width:1455px;height:1px;background:#d8d8d8"></div>
<div style="position:absolute;left:444px;top:173px;width:67px;height:833px;background:#f2f2f2"></div>
<div style="position:absolute;left:511px;top:173px;width:1388px;height:833px;background:#ffffff"></div>
<div style="position:absolute;left:444px;top:209px;width:1455px;height:27px;background:#fcfaed"></div>
<div style="position:absolute;left:578px;top:209px;width:140px;height:27px;background:#ece9fa"></div>
<div style="position:absolute;left:511px;top:173px;width:1px;height:833px;background:#d4d4d4"></div>
<div style="position:absolute;left:444px;top:144px;width:1455px;height:28px;background:#f2f2f2"></div>
<div style="position:absolute;left:444px;top:172px;width:1455px;height:1px;background:#d8d8d8"></div>
<svg style="position:absolute;left:520px;top:191px;" width="12" height="12" viewBox="0 0 12 12"><circle cx="6" cy="3.5" r="3" fill="#a9b0b8"/><path d="M0 12 A6 4.5 0 0 1 12 12 Z" fill="#a9b0b8"/></svg>
<div style="position:absolute;left:535px;top:187.5px;height:20px;line-height:20px;font-family:'Liberation Sans', sans-serif;font-size:15px;color:#8c8c8c;font-weight:400;white-space:pre;">koje</div>
<svg style="position:absolute;left:561px;top:245px;" width="12" height="12" viewBox="0 0 12 12"><circle cx="6" cy="3.5" r="3" fill="#a9b0b8"/><path d="M0 12 A6 4.5 0 0 1 12 12 Z" fill="#a9b0b8"/></svg>
<div style="position:absolute;left:576px;top:241.5px;height:20px;line-height:20px;font-family:'Liberation Sans', sans-serif;font-size:15px;color:#8c8c8c;font-weight:400;white-space:pre;">koje</div>
<div style="position:absolute;right:1453px;top:211.0px;height:27px;line-height:27px;font-family:'Liberation Mono', monospace;font-size:14px;color:#a6a6a6;font-weight:400;white-space:pre;text-align:right;">7</div>
<div style="position:absolute;right:1453px;top:265.0px;height:27px;line-height:27px;font-family:'Liberation Mono', monospace;font-size:14px;color:#a6a6a6;font-weight:400;white-space:pre;text-align:right;">8</div>
<div style="position:absolute;right:1453px;top:292.0px;height:27px;line-height:27px;font-family:'Liberation Mono', monospace;font-size:14px;color:#a6a6a6;font-weight:400;white-space:pre;text-align:right;">9</div>
<div style="position:absolute;right:1453px;top:319.0px;height:27px;line-height:27px;font-family:'Liberation Mono', monospace;font-size:14px;color:#a6a6a6;font-weight:400;white-space:pre;text-align:right;">10</div>
<div style="position:absolute;right:1453px;top:346.0px;height:27px;line-height:27px;font-family:'Liberation Mono', monospace;font-size:14px;color:#a6a6a6;font-weight:400;white-space:pre;text-align:right;">11</div>
<div style="position:absolute;right:1453px;top:373.0px;height:27px;line-height:27px;font-family:'Liberation Mono', monospace;font-size:14px;color:#a6a6a6;font-weight:400;white-space:pre;text-align:right;">12</div>
<div style="position:absolute;right:1453px;top:400.0px;height:27px;line-height:27px;font-family:'Liberation Mono', monospace;font-size:14px;color:#a6a6a6;font-weight:400;white-space:pre;text-align:right;">13</div>
<div style="position:absolute;right:1453px;top:427.0px;height:27px;line-height:27px;font-family:'Liberation Mono', monospace;font-size:14px;color:#a6a6a6;font-weight:400;white-space:pre;text-align:right;">14</div>
<div style="position:absolute;right:1453px;top:454.0px;height:27px;line-height:27px;font-family:'Liberation Mono', monospace;font-size:14px;color:#a6a6a6;font-weight:400;white-space:pre;text-align:right;">15</div>
<div style="position:absolute;right:1453px;top:481.0px;height:27px;line-height:27px;font-family:'Liberation Mono', monospace;font-size:14px;color:#a6a6a6;font-weight:400;white-space:pre;text-align:right;">16</div>
<div style="position:absolute;right:1453px;top:508.0px;height:27px;line-height:27px;font-family:'Liberation Mono', monospace;font-size:14px;color:#a6a6a6;font-weight:400;white-space:pre;text-align:right;">17</div>
<div style="position:absolute;right:1453px;top:535.0px;height:27px;line-height:27px;font-family:'Liberation Mono', monospace;font-size:14px;color:#a6a6a6;font-weight:400;white-space:pre;text-align:right;">18</div>
<div style="position:absolute;right:1453px;top:562.0px;height:27px;line-height:27px;font-family:'Liberation Mono', monospace;font-size:14px;color:#a6a6a6;font-weight:400;white-space:pre;text-align:right;">19</div>
<div style="position:absolute;right:1453px;top:589.0px;height:27px;line-height:27px;font-family:'Liberation Mono', monospace;font-size:14px;color:#a6a6a6;font-weight:400;white-space:pre;text-align:right;">20</div>
<div style="position:absolute;right:1453px;top:616.0px;height:27px;line-height:27px;font-family:'Liberation Mono', monospace;font-size:14px;color:#a6a6a6;font-weight:400;white-space:pre;text-align:right;">21</div>
<div style="position:absolute;right:1453px;top:643.0px;height:27px;line-height:27px;font-family:'Liberation Mono', monospace;font-size:14px;color:#a6a6a6;font-weight:400;white-space:pre;text-align:right;">22</div>
<div style="position:absolute;right:1453px;top:670.0px;height:27px;line-height:27px;font-family:'Liberation Mono', monospace;font-size:14px;color:#a6a6a6;font-weight:400;white-space:pre;text-align:right;">23</div>
<div style="position:absolute;right:1453px;top:697.0px;height:27px;line-height:27px;font-family:'Liberation Mono', monospace;font-size:14px;color:#a6a6a6;font-weight:400;white-space:pre;text-align:right;">24</div>
<div style="position:absolute;right:1453px;top:724.0px;height:27px;line-height:27px;font-family:'Liberation Mono', monospace;font-size:14px;color:#a6a6a6;font-weight:400;white-space:pre;text-align:right;">25</div>
<div style="position:absolute;right:1453px;top:751.0px;height:27px;line-height:27px;font-family:'Liberation Mono', monospace;font-size:14px;color:#a6a6a6;font-weight:400;white-space:pre;text-align:right;">26</div>
<div style="position:absolute;right:1453px;top:778.0px;height:27px;line-height:27px;font-family:'Liberation Mono', monospace;font-size:14px;color:#a6a6a6;font-weight:400;white-space:pre;text-align:right;">27</div>
<div style="position:absolute;right:1453px;top:805.0px;height:27px;line-height:27px;font-family:'Liberation Mono', monospace;font-size:14px;color:#a6a6a6;font-weight:400;white-space:pre;text-align:right;">28</div>
<div style="position:absolute;right:1453px;top:832.0px;height:27px;line-height:27px;font-family:'Liberation Mono', monospace;font-size:14px;color:#a6a6a6;font-weight:400;white-space:pre;text-align:right;">29</div>
<div style="position:absolute;right:1453px;top:859.0px;height:27px;line-height:27px;font-family:'Liberation Mono', monospace;font-size:14px;color:#a6a6a6;font-weight:400;white-space:pre;text-align:right;">30</div>
<div style="position:absolute;right:1453px;top:886.0px;height:27px;line-height:27px;font-family:'Liberation Mono', monospace;font-size:14px;color:#a6a6a6;font-weight:400;white-space:pre;text-align:right;">31</div>
<div style="position:absolute;right:1453px;top:913.0px;height:27px;line-height:27px;font-family:'Liberation Mono', monospace;font-size:14px;color:#a6a6a6;font-weight:400;white-space:pre;text-align:right;">32</div>
<div style="position:absolute;right:1453px;top:940.0px;height:27px;line-height:27px;font-family:'Liberation Mono', monospace;font-size:14px;color:#a6a6a6;font-weight:400;white-space:pre;text-align:right;">33</div>
<div style="position:absolute;right:1453px;top:967.0px;height:27px;line-height:27px;font-family:'Liberation Mono', monospace;font-size:14px;color:#a6a6a6;font-weight:400;white-space:pre;text-align:right;">34</div>
<div style="position:absolute;right:1453px;top:994.0px;height:27px;line-height:27px;font-family:'Liberation Mono', monospace;font-size:14px;color:#a6a6a6;font-weight:400;white-space:pre;text-align:right;">35</div>
<div style="position:absolute;left:518px;top:210.5px;height:27px;line-height:27px;font-family:'Liberation Mono', monospace;font-size:16.67px;color:#080808;white-space:pre"><span style="color:#0033b3">class</span> ActivityHeader : LinearLayoutBuilder.Editor {</div>
<div style="position:absolute;left:558px;top:264.5px;height:27px;line-height:27px;font-family:'Liberation Mono', monospace;font-size:16.67px;color:#080808;white-space:pre"><span style="color:#0033b3">override</span> <span style="color:#0033b3">fun</span> <span style="color:#00627a">edit</span>(target: LinearLayoutBuilder) {</div>
<div style="position:absolute;left:598px;top:291.5px;height:27px;line-height:27px;font-family:'Liberation Mono', monospace;font-size:16.67px;color:#080808;white-space:pre"><span style="color:#00627a;font-style:italic">with</span>(target) <span style="font-weight:700">{</span><span style="display:inline-block;width:185px;height:18px;line-height:18px;margin:0 2px;padding-left:6px;box-sizing:border-box;vertical-align:1px;background:#f3f3f3;border-radius:4px;font-family:'Liberation Sans', sans-serif;font-size:15px;color:#8c8c8c;text-align:left;letter-spacing:0.25px">this: LinearLayoutBuilder</span></div>
<div style="position:absolute;left:638px;top:318.5px;height:27px;line-height:27px;font-family:'Liberation Mono', monospace;font-size:16.67px;color:#080808;white-space:pre">addLinearLayout <span style="font-weight:700">{</span><span style="display:inline-block;width:185px;height:18px;line-height:18px;margin:0 2px;padding-left:6px;box-sizing:border-box;vertical-align:1px;background:#f3f3f3;border-radius:4px;font-family:'Liberation Sans', sans-serif;font-size:15px;color:#8c8c8c;text-align:left;letter-spacing:0.25px">this: LinearLayoutBuilder</span></div>
<div style="position:absolute;left:678px;top:345.5px;height:27px;line-height:27px;font-family:'Liberation Mono', monospace;font-size:16.67px;color:#080808;white-space:pre">setOrientationHorizontal()</div>
<div style="position:absolute;left:678px;top:372.5px;height:27px;line-height:27px;font-family:'Liberation Mono', monospace;font-size:16.67px;color:#080808;white-space:pre">setBackgroundColorId(R.color.<span style="color:#871094;font-style:italic;text-decoration:underline;text-decoration-color:#333;text-underline-offset:3px;text-decoration-skip-ink:none">black</span>)</div>
<div style="position:absolute;left:678px;top:399.5px;height:27px;line-height:27px;font-family:'Liberation Mono', monospace;font-size:16.67px;color:#080808;white-space:pre">setGravityBottom()</div>
<div style="position:absolute;left:678px;top:426.5px;height:27px;line-height:27px;font-family:'Liberation Mono', monospace;font-size:16.67px;color:#080808;white-space:pre">setPaddingsDP(<span style="display:inline-block;width:22px;height:18px;line-height:18px;margin:0 2px;vertical-align:1px;background:#f3f3f3;border-radius:4px;font-family:'Liberation Sans', sans-serif;font-size:15px;color:#8c8c8c;text-align:center;letter-spacing:0px">h:</span><span style="color:#1750eb">5</span>, <span style="display:inline-block;width:22px;height:18px;line-height:18px;margin:0 2px;vertical-align:1px;background:#f3f3f3;border-radius:4px;font-family:'Liberation Sans', sans-serif;font-size:15px;color:#8c8c8c;text-align:center;letter-spacing:0px">v:</span><span style="color:#1750eb">0</span>)</div>
<div style="position:absolute;left:678px;top:453.5px;height:27px;line-height:27px;font-family:'Liberation Mono', monospace;font-size:16.67px;color:#080808;white-space:pre">addTextView <span style="font-weight:700">{</span><span style="display:inline-block;width:159px;height:18px;line-height:18px;margin:0 2px;padding-left:6px;box-sizing:border-box;vertical-align:1px;background:#f3f3f3;border-radius:4px;font-family:'Liberation Sans', sans-serif;font-size:15px;color:#8c8c8c;text-align:left;letter-spacing:0.25px">this: TextViewBuilder</span></div>
<div style="position:absolute;left:718px;top:480.5px;height:27px;line-height:27px;font-family:'Liberation Mono', monospace;font-size:16.67px;color:#080808;white-space:pre">setMarginsDP(<span style="display:inline-block;width:38px;height:18px;line-height:18px;margin:0 2px;vertical-align:1px;background:#f3f3f3;border-radius:4px;font-family:'Liberation Sans', sans-serif;font-size:15px;color:#8c8c8c;text-align:center;letter-spacing:0px">left:</span><span style="color:#1750eb">0</span>, <span style="display:inline-block;width:38px;height:18px;line-height:18px;margin:0 2px;vertical-align:1px;background:#f3f3f3;border-radius:4px;font-family:'Liberation Sans', sans-serif;font-size:15px;color:#8c8c8c;text-align:center;letter-spacing:0px">top:</span><span style="color:#1750eb">0</span>, <span style="display:inline-block;width:48px;height:18px;line-height:18px;margin:0 2px;vertical-align:1px;background:#f3f3f3;border-radius:4px;font-family:'Liberation Sans', sans-serif;font-size:15px;color:#8c8c8c;text-align:center;letter-spacing:0px">right:</span><span style="color:#1750eb">0</span>, <span style="display:inline-block;width:65px;height:18px;line-height:18px;margin:0 2px;vertical-align:1px;background:#f3f3f3;border-radius:4px;font-family:'Liberation Sans', sans-serif;font-size:15px;color:#8c8c8c;text-align:center;letter-spacing:0px">bottom:</span><span style="color:#1750eb">2</span>)</div>
<div style="position:absolute;left:718px;top:507.5px;height:27px;line-height:27px;font-family:'Liberation Mono', monospace;font-size:16.67px;color:#080808;white-space:pre">setText(<span style="color:#067d17">"Marble Maze Master"</span>)</div>
<div style="position:absolute;left:718px;top:534.5px;height:27px;line-height:27px;font-family:'Liberation Mono', monospace;font-size:16.67px;color:#080808;white-space:pre">setTextColorID(R.color.<span style="color:#871094;font-style:italic;text-decoration:underline;text-decoration-color:#333;text-underline-offset:3px;text-decoration-skip-ink:none">white</span>)</div>
<div style="position:absolute;left:718px;top:561.5px;height:27px;line-height:27px;font-family:'Liberation Mono', monospace;font-size:16.67px;color:#080808;white-space:pre">setFontId(R.font.<span style="color:#871094;font-style:italic;text-decoration:underline;text-decoration-color:#333;text-underline-offset:3px;text-decoration-skip-ink:none">nunito_bold</span>)</div>
<div style="position:absolute;left:718px;top:588.5px;height:27px;line-height:27px;font-family:'Liberation Mono', monospace;font-size:16.67px;color:#080808;white-space:pre">setTextSizeSP(<span style="color:#1750eb">26</span>)</div>
<div style="position:absolute;left:678px;top:615.5px;height:27px;line-height:27px;font-family:'Liberation Mono', monospace;font-size:16.67px;color:#080808;white-space:pre"><span style="font-weight:700">}</span></div>
<div style="position:absolute;left:678px;top:642.5px;height:27px;line-height:27px;font-family:'Liberation Mono', monospace;font-size:16.67px;color:#080808;white-space:pre">addFiller()</div>
<div style="position:absolute;left:678px;top:669.5px;height:27px;line-height:27px;font-family:'Liberation Mono', monospace;font-size:16.67px;color:#080808;white-space:pre">addImageView <span style="font-weight:700">{</span><span style="display:inline-block;width:168px;height:18px;line-height:18px;margin:0 2px;padding-left:6px;box-sizing:border-box;vertical-align:1px;background:#f3f3f3;border-radius:4px;font-family:'Liberation Sans', sans-serif;font-size:15px;color:#8c8c8c;text-align:left;letter-spacing:0.25px">this: ImageViewBuilder</span></div>
<div style="position:absolute;left:718px;top:696.5px;height:27px;line-height:27px;font-family:'Liberation Mono', monospace;font-size:16.67px;color:#080808;white-space:pre">setSizeDP(<span style="color:#1750eb">45</span>)</div>
<div style="position:absolute;left:718px;top:723.5px;height:27px;line-height:27px;font-family:'Liberation Mono', monospace;font-size:16.67px;color:#080808;white-space:pre">addReceiver(Playground.<span style="color:#871094;font-style:italic;text-decoration:underline;text-decoration-color:#333;text-underline-offset:3px;text-decoration-skip-ink:none">autoplay</span>) <span style="font-weight:700">{</span><span style="display:inline-block;width:83px;height:18px;line-height:18px;margin:0 2px;padding-left:6px;box-sizing:border-box;vertical-align:1px;background:#f3f3f3;border-radius:4px;font-family:'Liberation Sans', sans-serif;font-size:15px;color:#8c8c8c;text-align:left;letter-spacing:0.25px">it: Boolean</span></div>
<div style="position:absolute;left:758px;top:750.5px;height:27px;line-height:27px;font-family:'Liberation Mono', monospace;font-size:16.67px;color:#080808;white-space:pre"><span style="color:#0033b3">when</span> (<span style="font-weight:700">it</span>) {</div>
<div style="position:absolute;left:798px;top:777.5px;height:27px;line-height:27px;font-family:'Liberation Mono', monospace;font-size:16.67px;color:#080808;white-space:pre"><span style="color:#0033b3">true</span> -> setDrawableId(R.drawable.<span style="color:#871094;font-style:italic;text-decoration:underline;text-decoration-color:#333;text-underline-offset:3px;text-decoration-skip-ink:none">playing</span>)</div>
<div style="position:absolute;left:798px;top:804.5px;height:27px;line-height:27px;font-family:'Liberation Mono', monospace;font-size:16.67px;color:#080808;white-space:pre"><span style="color:#0033b3">else</span> -> setDrawableId(R.drawable.<span style="color:#871094;font-style:italic;text-decoration:underline;text-decoration-color:#333;text-underline-offset:3px;text-decoration-skip-ink:none">menu</span>)</div>
<div style="position:absolute;left:758px;top:831.5px;height:27px;line-height:27px;font-family:'Liberation Mono', monospace;font-size:16.67px;color:#080808;white-space:pre">}</div>
<div style="position:absolute;left:718px;top:858.5px;height:27px;line-height:27px;font-family:'Liberation Mono', monospace;font-size:16.67px;color:#080808;white-space:pre"><span style="font-weight:700">}</span></div>
<div style="position:absolute;left:718px;top:885.5px;height:27px;line-height:27px;font-family:'Liberation Mono', monospace;font-size:16.67px;color:#080808;white-space:pre">setMarginsDP(<span style="display:inline-block;width:38px;height:18px;line-height:18px;margin:0 2px;vertical-align:1px;background:#f3f3f3;border-radius:4px;font-family:'Liberation Sans', sans-serif;font-size:15px;color:#8c8c8c;text-align:center;letter-spacing:0px">left:</span><span style="color:#1750eb">0</span>, <span style="display:inline-block;width:38px;height:18px;line-height:18px;margin:0 2px;vertical-align:1px;background:#f3f3f3;border-radius:4px;font-family:'Liberation Sans', sans-serif;font-size:15px;color:#8c8c8c;text-align:center;letter-spacing:0px">top:</span><span style="color:#1750eb">0</span>, <span style="display:inline-block;width:48px;height:18px;line-height:18px;margin:0 2px;vertical-align:1px;background:#f3f3f3;border-radius:4px;font-family:'Liberation Sans', sans-serif;font-size:15px;color:#8c8c8c;text-align:center;letter-spacing:0px">right:</span><span style="color:#1750eb">0</span>, <span style="display:inline-block;width:65px;height:18px;line-height:18px;margin:0 2px;vertical-align:1px;background:#f3f3f3;border-radius:4px;font-family:'Liberation Sans', sans-serif;font-size:15px;color:#8c8c8c;text-align:center;letter-spacing:0px">bottom:</span><span style="color:#1750eb">3</span>)</div>
<div style="position:absolute;left:718px;top:912.5px;height:27px;line-height:27px;font-family:'Liberation Mono', monospace;font-size:16.67px;color:#080808;white-space:pre">setOnClickListener <span style="font-weight:700">{</span></div>
<div style="position:absolute;left:758px;top:939.5px;height:27px;line-height:27px;font-family:'Liberation Mono', monospace;font-size:16.67px;color:#080808;white-space:pre">MenuContent.<span style="color:#871094">visible</span>.switch()</div>
<div style="position:absolute;left:718px;top:966.5px;height:27px;line-height:27px;font-family:'Liberation Mono', monospace;font-size:16.67px;color:#080808;white-space:pre"><span style="font-weight:700">}</span></div>
<div style="position:absolute;left:678px;top:993.5px;height:27px;line-height:27px;font-family:'Liberation Mono', monospace;font-size:16.67px;color:#080808;white-space:pre"><span style="font-weight:700">}</span></div>
<div style="position:absolute;left:555px;top:291px;width:1px;height:715px;background:#e6e6e6"></div>
<div style="position:absolute;left:595px;top:318px;width:1px;height:688px;background:#e6e6e6"></div>
<div style="position:absolute;left:635px;top:345px;width:1px;height:661px;background:#e6e6e6"></div>
<div style="position:absolute;left:675px;top:480px;width:1px;height:134px;background:#e6e6e6"></div>
<div style="position:absolute;left:675px;top:697px;width:1px;height:295px;background:#e6e6e6"></div>
<div style="position:absolute;left:715px;top:750px;width:1px;height:107px;background:#e6e6e6"></div>
<div style="position:absolute;left:755px;top:777px;width:1px;height:53px;background:#e6e6e6"></div>
<div style="position:absolute;left:715px;top:939px;width:1px;height:26px;background:#e6e6e6"></div>
<svg style="position:absolute;left:505px;top:215px;" width="13" height="16" viewBox="0 0 13 16"><path d="M0.5 0.5 H12.5 V9 L6.5 15 L0.5 9 Z" fill="#fff" stroke="#c4c4c4"/><path d="M3.5 5 H9.5" stroke="#aaa"/></svg>
<svg style="position:absolute;left:505px;top:269px;" width="13" height="16" viewBox="0 0 13 16"><path d="M0.5 0.5 H12.5 V9 L6.5 15 L0.5 9 Z" fill="#fff" stroke="#c4c4c4"/><path d="M3.5 5 H9.5" stroke="#aaa"/></svg>
<svg style="position:absolute;left:505px;top:296px;" width="13" height="16" viewBox="0 0 13 16"><path d="M0.5 0.5 H12.5 V9 L6.5 15 L0.5 9 Z" fill="#fff" stroke="#c4c4c4"/><path d="M3.5 5 H9.5" stroke="#aaa"/></svg>
<svg style="position:absolute;left:505px;top:323px;" width="13" height="16" viewBox="0 0 13 16"><path d="M0.5 0.5 H12.5 V9 L6.5 15 L0.5 9 Z" fill="#fff" stroke="#c4c4c4"/><path d="M3.5 5 H9.5" stroke="#aaa"/></svg>
<svg style="position:absolute;left:505px;top:458px;" width="13" height="16" viewBox="0 0 13 16"><path d="M0.5 0.5 H12.5 V9 L6.5 15 L0.5 9 Z" fill="#fff" stroke="#c4c4c4"/><path d="M3.5 5 H9.5" stroke="#aaa"/></svg>
<svg style="position:absolute;left:505px;top:674px;" width="13" height="16" viewBox="0 0 13 16"><path d="M0.5 0.5 H12.5 V9 L6.5 15 L0.5 9 Z" fill="#fff" stroke="#c4c4c4"/><path d="M3.5 5 H9.5" stroke="#aaa"/></svg>
<svg style="position:absolute;left:505px;top:728px;" width="13" height="16" viewBox="0 0 13 16"><path d="M0.5 0.5 H12.5 V9 L6.5 15 L0.5 9 Z" fill="#fff" stroke="#c4c4c4"/><path d="M3.5 5 H9.5" stroke="#aaa"/></svg>
<svg style="position:absolute;left:505px;top:755px;" width="13" height="16" viewBox="0 0 13 16"><path d="M0.5 0.5 H12.5 V9 L6.5 15 L0.5 9 Z" fill="#fff" stroke="#c4c4c4"/><path d="M3.5 5 H9.5" stroke="#aaa"/></svg>
<svg style="position:absolute;left:505px;top:917px;" width="13" height="16" viewBox="0 0 13 16"><path d="M0.5 0.5 H12.5 V9 L6.5 15 L0.5 9 Z" fill="#fff" stroke="#c4c4c4"/><path d="M3.5 5 H9.5" stroke="#aaa"/></svg>
<svg style="position:absolute;left:505px;top:620px;" width="13" height="16" viewBox="0 0 13 16"><path d="M0.5 15.5 H12.5 V7 L6.5 1 L0.5 7 Z" fill="#fff" stroke="#c4c4c4"/><path d="M3.5 10 H9.5" stroke="#aaa"/></svg>
<svg style="position:absolute;left:505px;top:836px;" width="13" height="16" viewBox="0 0 13 16"><path d="M0.5 15.5 H12.5 V7 L6.5 1 L0.5 7 Z" fill="#fff" stroke="#c4c4c4"/><path d="M3.5 10 H9.5" stroke="#aaa"/></svg>
<svg style="position:absolute;left:505px;top:863px;" width="13" height="16" viewBox="0 0 13 16"><path d="M0.5 15.5 H12.5 V7 L6.5 1 L0.5 7 Z" fill="#fff" stroke="#c4c4c4"/><path d="M3.5 10 H9.5" stroke="#aaa"/></svg>
<svg style="position:absolute;left:505px;top:971px;" width="13" height="16" viewBox="0 0 13 16"><path d="M0.5 15.5 H12.5 V7 L6.5 1 L0.5 7 Z" fill="#fff" stroke="#c4c4c4"/><path d="M3.5 10 H9.5" stroke="#aaa"/></svg>
<svg style="position:absolute;left:505px;top:998px;" width="13" height="16" viewBox="0 0 13 16"><path d="M0.5 15.5 H12.5 V7 L6.5 1 L0.5 7 Z" fill="#fff" stroke="#c4c4c4"/><path d="M3.5 10 H9.5" stroke="#aaa"/></svg>
<svg style="position:absolute;left:476px;top:270px;" width="20" height="15" viewBox="0 0 20 15"><circle cx="6" cy="7.5" r="5.8" fill="#5fb865"/><path d="M6 4.5 V10.5" stroke="#1f3d22" stroke-width="1.5"/><path d="M4.5 4.5 H7.5 M4.5 10.5 H7.5" stroke="#1f3d22" stroke-width="1"/><path d="M14 15 V2 M11 5 L14 1 L17 5" stroke="#e0393e" stroke-width="1.5" fill="none"/></svg>
<div style="position:absolute;left:478px;top:380px;width:12px;height:12px;background:#000"></div>
<div style="position:absolute;left:478px;top:542px;width:12px;height:11px;background:#fff"></div>
<svg style="position:absolute;left:481px;top:783px;" width="14" height="14" viewBox="0 0 14 14"><circle cx="7" cy="7" r="5.2" fill="none" stroke="#22b24c" stroke-width="2.6"/></svg>
<svg style="position:absolute;left:478px;top:812px;" width="18" height="11" viewBox="0 0 18 11"><path d="M1 0 L5 11 M6 0 L10 11 M11 0 L15 11" stroke="#fff" stroke-width="2.5"/></svg>
<div style="position:absolute;left:94px;top:1006px;width:1805px;height:31px;background:#f2f2f2"></div>
<div style="position:absolute;left:94px;top:1006px;width:1805px;height:1px;background:#d1d1d1"></div>
<div style="position:absolute;left:100px;top:1010.5px;height:20px;line-height:20px;font-family:'Liberation Sans', sans-serif;font-size:15px;color:#222;font-weight:400;white-space:pre;">Run:</div>
<svg style="position:absolute;left:147px;top:1012px;" width="16" height="14" viewBox="0 0 16 14"><path d="M1 11 A6 6 0 0 1 13 11 Z" fill="#3ddc84"/><path d="M3 3 L5 6 M11 3 L9 6" stroke="#3ddc84" stroke-width="1.3"/><circle cx="12.5" cy="11.5" r="2.6" fill="#1ea83c"/></svg>
<div style="position:absolute;left:167px;top:1010.5px;height:20px;line-height:20px;font-family:'Liberation Sans', sans-serif;font-size:15px;color:#222;font-weight:400;white-space:pre;">app</div>
<svg style="position:absolute;left:197px;top:1016px;" width="9" height="9" viewBox="0 0 9 9"><path d="M0.5 0.5 L8.5 8.5 M8.5 0.5 L0.5 8.5" stroke="#a8a8a8" stroke-width="1.1"/></svg>
<div style="position:absolute;left:135px;top:1031px;width:81px;height:3px;background:#8a93a8;border-radius:1px"></div>
<div style="position:absolute;left:94px;top:1036px;width:1805px;height:1px;background:#d1d1d1"></div>
<svg style="position:absolute;left:1851px;top:1013px;" width="15" height="15" viewBox="0 0 15 15"><polygon points="14.86,8.96 11.99,10.50 11.67,13.74 8.55,12.80 6.04,14.86 4.50,11.99 1.26,11.67 2.20,8.55 0.14,6.04 3.01,4.50 3.33,1.26 6.45,2.20 8.96,0.14 10.50,3.01 13.74,3.33 12.80,6.45" fill="#6e6e6e"/><circle cx="7.5" cy="7.5" r="5.3999999999999995" fill="#6e6e6e"/><circle cx="7.5" cy="7.5" r="2.25" fill="#f2f2f2"/></svg>
<div style="position:absolute;left:1877px;top:1019px;width:13px;height:2px;background:#6e6e6e"></div>
<div style="position:absolute;left:1899px;top:143px;width:21px;height:895px;background:#f2f2f2"></div>
<div style="position:absolute;left:1899px;top:143px;width:1px;height:895px;background:#dcdcdc"></div>
<svg style="position:absolute;left:1903px;top:671px;" width="13" height="13" viewBox="0 0 13 13"><path d="M2 10 V6 A4.5 4.5 0 0 1 11 6 V10 H2 Z M5 11 H8" stroke="#555" fill="#555"/><circle cx="11" cy="2" r="2" fill="#3592d8"/></svg>
<div style="position:absolute;left:1909px;top:722px;width:0;height:0"><div style="position:absolute;left:0;top:0;transform:translate(-50%,-50%) rotate(90deg);font-family:'Liberation Sans', sans-serif;font-size:12.6px;line-height:16px;color:#222;white-space:pre">Notifications</div></div>
<svg style="position:absolute;left:1903px;top:784px;" width="13" height="13" viewBox="0 0 13 13"><rect x="0.5" y="3.5" width="8" height="9" fill="none" stroke="#555"/><rect x="4.5" y="0.5" width="8" height="8" fill="#f2f2f2" stroke="#555"/></svg>
<div style="position:absolute;left:1909px;top:846px;width:0;height:0"><div style="position:absolute;left:0;top:0;transform:translate(-50%,-50%) rotate(90deg);font-family:'Liberation Sans', sans-serif;font-size:12.1px;line-height:16px;color:#222;white-space:pre">Running Devices</div></div>
<svg style="position:absolute;left:1904px;top:919px;" width="11" height="14" viewBox="0 0 11 14"><rect x="0.5" y="0.5" width="10" height="13" rx="1.5" fill="none" stroke="#555"/><path d="M3 11 H8" stroke="#555"/></svg>
<div style="position:absolute;left:1909px;top:980px;width:0;height:0"><div style="position:absolute;left:0;top:0;transform:translate(-50%,-50%) rotate(90deg);font-family:'Liberation Sans', sans-serif;font-size:12.6px;line-height:16px;color:#222;white-space:pre">Device Explorer</div></div>
<div style="position:absolute;left:72px;top:1037px;width:1848px;height:23px;background:#f2f2f2"></div>
<div style="position:absolute;left:72px;top:1037px;width:1848px;height:1px;background:#d9d9d9"></div>
<div style="position:absolute;left:72px;top:1059px;width:1848px;height:1px;background:#d4d4d4"></div>
<div style="position:absolute;left:144px;top:1038px;width:57px;height:21px;background:#dadada"></div>
<div style="position:absolute;left:120px;top:1039.5px;height:20px;line-height:20px;font-family:'Liberation Sans', sans-serif;font-size:13px;color:#222;font-weight:400;white-space:pre;">Git</div>
<div style="position:absolute;left:171px;top:1039.5px;height:20px;line-height:20px;font-family:'Liberation Sans', sans-serif;font-size:13px;color:#222;font-weight:400;white-space:pre;">Run</div>
<div style="position:absolute;left:229px;top:1039.5px;height:20px;line-height:20px;font-family:'Liberation Sans', sans-serif;font-size:13px;color:#222;font-weight:400;white-space:pre;">Profiler</div>
<div style="position:absolute;left:309px;top:1039.5px;height:20px;line-height:20px;font-family:'Liberation Sans', sans-serif;font-size:13px;color:#222;font-weight:400;white-space:pre;">Logcat</div>
<div style="position:absolute;left:387px;top:1039.5px;height:20px;line-height:20px;font-family:'Liberation Sans', sans-serif;font-size:13px;color:#222;font-weight:400;white-space:pre;">App Quality Insights</div>
<div style="position:absolute;left:539px;top:1039.5px;height:20px;line-height:20px;font-family:'Liberation Sans', sans-serif;font-size:13px;color:#222;font-weight:400;white-space:pre;">Build</div>
<div style="position:absolute;left:603px;top:1039.5px;height:20px;line-height:20px;font-family:'Liberation Sans', sans-serif;font-size:13px;color:#222;font-weight:400;white-space:pre;">TODO</div>
<div style="position:absolute;left:677px;top:1039.5px;height:20px;line-height:20px;font-family:'Liberation Sans', sans-serif;font-size:13px;color:#222;font-weight:400;white-space:pre;">Problems</div>
<div style="position:absolute;left:770px;top:1039.5px;height:20px;line-height:20px;font-family:'Liberation Sans', sans-serif;font-size:13px;color:#222;font-weight:400;white-space:pre;">Terminal</div>
<div style="position:absolute;left:857px;top:1039.5px;height:20px;line-height:20px;font-family:'Liberation Sans', sans-serif;font-size:13px;color:#222;font-weight:400;white-space:pre;">Services</div>
<div style="position:absolute;left:944px;top:1039.5px;height:20px;line-height:20px;font-family:'Liberation Sans', sans-serif;font-size:13px;color:#222;font-weight:400;white-space:pre;">App Inspection</div>
<svg style="position:absolute;left:104px;top:1043px;" width="10" height="13" viewBox="0 0 10 13"><circle cx="2.5" cy="2.5" r="1.8" fill="none" stroke="#555" stroke-width="1.2"/><path d="M2.5 4.5 V13 M2.5 10 Q2.5 6 8 4" stroke="#555" stroke-width="1.4" fill="none"/></svg>
<svg style="position:absolute;left:155px;top:1043px;" width="14" height="13" viewBox="0 0 14 13"><path d="M0 0 L10 6 L0 12 Z" fill="#555"/><circle cx="10" cy="10" r="2.8" fill="#1ea83c"/></svg>
<svg style="position:absolute;left:211px;top:1044px;" width="14" height="11" viewBox="0 0 14 11"><path d="M1 10 A6.5 6.5 0 0 1 13 10" stroke="#555" stroke-width="1.6" fill="none"/><path d="M7 10 L10 4" stroke="#555" stroke-width="1.5"/></svg>
<svg style="position:absolute;left:292px;top:1044px;" width="13" height="11" viewBox="0 0 13 11"><path d="M0 1.5 H12 M0 5.5 H8 M0 9.5 H11" stroke="#555" stroke-width="1.5"/></svg>
<svg style="position:absolute;left:370px;top:1043px;" width="14" height="13" viewBox="0 0 14 13"><path d="M3 0.5 H11 L13.5 4 L7 12.5 L0.5 4 Z M0.5 4 H13.5 M5 0.5 L7 12.5 L9 0.5" stroke="#555" fill="none" stroke-width="1"/></svg>
<svg style="position:absolute;left:522px;top:1043px;" width="14" height="13" viewBox="0 0 14 13"><path d="M1 3 L6 0 L9 3 L6 5 L13 12 L11 13 L4 6 L3 7 Z" fill="#555"/></svg>
<svg style="position:absolute;left:588px;top:1044px;" width="12" height="11" viewBox="0 0 12 11"><path d="M0 1.5 H2 M4 1.5 H12 M0 5.5 H2 M4 5.5 H12 M0 9.5 H2 M4 9.5 H12" stroke="#555" stroke-width="1.3"/></svg>
<svg style="position:absolute;left:662px;top:1043px;" width="13" height="13" viewBox="0 0 13 13"><circle cx="6.5" cy="6.5" r="6" fill="#555"/><path d="M6.5 3 V7.5 M6.5 9 V10.5" stroke="#f2f2f2" stroke-width="1.6"/></svg>
<svg style="position:absolute;left:753px;top:1043px;" width="13" height="13" viewBox="0 0 13 13"><rect x="0" y="0" width="13" height="13" rx="1" fill="#555"/><path d="M3 4 L6 6.5 L3 9" stroke="#f2f2f2" stroke-width="1.3" fill="none"/></svg>
<svg style="position:absolute;left:840px;top:1043px;" width="14" height="14" viewBox="0 0 14 14"><path d="M4 0.5 H10 L13.5 7 L10 13.5 H4 L0.5 7 Z" fill="#555"/><path d="M5 4 L9 7 L5 10 Z" fill="#f2f2f2"/></svg>
<svg style="position:absolute;left:928px;top:1043px;" width="12" height="14" viewBox="0 0 12 14"><path d="M3 1 H9 V4 H12 V7 H9 V13 H3 V7 H0 V4 H3 Z" fill="#555"/></svg>
<div style="position:absolute;left:72px;top:1060px;width:1848px;height:20px;background:#f2f2f2"></div>
<svg style="position:absolute;left:83px;top:1063px;" width="14" height="14" viewBox="0 0 14 14"><rect x="3.5" y="0.5" width="10" height="10" fill="none" stroke="#666"/><rect x="0.5" y="3.5" width="10" height="10" fill="#f2f2f2" stroke="#666"/></svg>
<div style="position:absolute;left:111px;top:1060.0px;height:20px;line-height:20px;font-family:'Liberation Sans', sans-serif;font-size:14.7px;color:#222;font-weight:400;white-space:pre;">Install successfully finished in 222 ms. (7 minutes ago)</div>
<div style="position:absolute;left:1617px;top:1060.0px;height:20px;line-height:20px;font-family:'Liberation Sans', sans-serif;font-size:14.7px;color:#222;font-weight:400;white-space:pre;">7:7</div>
<div style="position:absolute;left:1652px;top:1060.0px;height:20px;line-height:20px;font-family:'Liberation Sans', sans-serif;font-size:14.7px;color:#222;font-weight:400;white-space:pre;">LF</div>
<div style="position:absolute;left:1677px;top:1060.0px;height:20px;line-height:20px;font-family:'Liberation Sans', sans-serif;font-size:14.7px;color:#222;font-weight:400;white-space:pre;">UTF-8</div>
<svg style="position:absolute;left:1727px;top:1064px;" width="13" height="11" viewBox="0 0 13 11"><path d="M0 0 H13 V8 H4 L1 11 V8 H0 Z" fill="#666"/></svg>
<div style="position:absolute;left:1751px;top:1060.0px;height:20px;line-height:20px;font-family:'Liberation Sans', sans-serif;font-size:14.7px;color:#222;font-weight:400;white-space:pre;letter-spacing:-0.4px">4 spaces</div>
<svg style="position:absolute;left:1822px;top:1062px;" width="10" height="15" viewBox="0 0 10 15"><circle cx="2.5" cy="2.5" r="1.8" fill="none" stroke="#555" stroke-width="1.2"/><path d="M2.5 4.5 V15 M2.5 11 Q2.5 6 8 3" stroke="#555" stroke-width="1.4" fill="none"/></svg>
<div style="position:absolute;left:1837px;top:1060.0px;height:20px;line-height:20px;font-family:'Liberation Sans', sans-serif;font-size:14.7px;color:#222;font-weight:400;white-space:pre;">master</div>
<svg style="position:absolute;left:1903px;top:1064px;" width="14" height="12" viewBox="0 0 14 12"><path d="M1.5 5 V2.5 A2.5 2.5 0 0 1 6.5 2.5" stroke="#555" stroke-width="1.3" fill="none"/><rect x="4" y="5" width="9" height="7" fill="#555"/></svg>
<div style="position:absolute;left:1888px;top:173px;width:10px;height:656px;background:#e6e6e6"></div>
<div style="position:absolute;left:1455px;top:145px;width:402px;height:862px;border-radius:52px;background:#1a1a1c;border:2px solid #1e1e1e;box-shadow:0 8px 16px rgba(0,0,0,0.30), 0 0 8px rgba(0,0,0,0.18), inset 0 0 0 1.5px #858585, inset 0 0 0 3px #2a2a2a"></div>
<div style="position:absolute;left:1460px;top:150px;width:392px;height:852px;border-radius:47px;background:#0b0b0e;border:1.5px solid #5a5a5a"></div>
<div style="position:absolute;left:1462px;top:152px;width:388px;height:848px;border-radius:45px;background:#0b0b0e"></div>
<svg style="position:absolute;left:1553px;top:164px;" width="26" height="26" viewBox="0 0 26 26"><circle cx="13" cy="13" r="12" fill="#0d0d12"/><circle cx="13" cy="13" r="6" fill="#14141c" stroke="#1c1c24"/><circle cx="13" cy="13" r="2.5" fill="#262640"/></svg>
<div style="position:absolute;left:1586px;top:168px;width:8px;height:19px;background:#111116;border-radius:4px;border:1px solid #1c1c22"></div>
<div style="position:absolute;left:1636px;top:172px;width:42px;height:6px;background:#1e1e22;border-radius:3px"></div>
<div style="position:absolute;left:1469px;top:195px;width:375px;height:791px;border-radius:22px 22px 28px 28px;background:#000;overflow:hidden">
<div style="position:absolute;left:0;top:67px;width:375px;height:684px;background:#d9caa9"></div>
</div>
<svg style="position:absolute;left:1469px;top:262px;overflow:hidden" width="375" height="684" viewBox="1469 262 375 684"><defs><linearGradient id="wg" x1="0" y1="0" x2="1" y2="0"><stop offset="0" stop-color="#cfc3ab"/><stop offset="0.1" stop-color="#d9cfba"/><stop offset="0.2" stop-color="#d3c6ad"/><stop offset="0.33" stop-color="#ddd3c0"/><stop offset="0.45" stop-color="#d6c9b0"/><stop offset="0.55" stop-color="#e0d6c3"/><stop offset="0.68" stop-color="#d8ccb3"/><stop offset="0.8" stop-color="#e1d8c6"/><stop offset="0.9" stop-color="#d9cdb5"/><stop offset="1" stop-color="#d5c9b1"/></linearGradient></defs><rect x="1469" y="262" width="375" height="684" fill="url(#wg)"/><rect x="1590.4" y="358.5" width="2.4" height="160.2" rx="2" fill="#d2c3a6" opacity="0.45"/><rect x="1504.3" y="635.0" width="3.3" height="211.9" rx="2" fill="#cbbb9c" opacity="0.45"/><rect x="1631.6" y="306.7" width="4.5" height="48.1" rx="2" fill="#d2c3a6" opacity="0.45"/><rect x="1515.4" y="404.9" width="7.7" height="155.5" rx="2" fill="#d2c3a6" opacity="0.45"/><rect x="1688.6" y="293.7" width="5.3" height="74.2" rx="2" fill="#e6dece" opacity="0.45"/><rect x="1577.6" y="354.3" width="3.9" height="53.6" rx="2" fill="#e6dece" opacity="0.45"/><rect x="1507.6" y="627.6" width="2.6" height="67.6" rx="2" fill="#cbbb9c" opacity="0.45"/><rect x="1680.6" y="658.2" width="5.2" height="129.3" rx="2" fill="#c9b896" opacity="0.45"/><rect x="1643.6" y="853.0" width="3.5" height="102.3" rx="2" fill="#e6dece" opacity="0.45"/><rect x="1731.1" y="418.2" width="5.2" height="144.9" rx="2" fill="#c9b896" opacity="0.45"/><rect x="1742.5" y="446.3" width="2.7" height="226.0" rx="2" fill="#e9e2d4" opacity="0.45"/><rect x="1530.9" y="480.9" width="4.5" height="216.7" rx="2" fill="#cbbb9c" opacity="0.45"/><rect x="1755.7" y="628.7" width="3.9" height="205.1" rx="2" fill="#c9b896" opacity="0.45"/><rect x="1691.9" y="633.1" width="7.0" height="121.2" rx="2" fill="#c9b896" opacity="0.45"/><rect x="1646.8" y="687.1" width="6.2" height="42.1" rx="2" fill="#d2c3a6" opacity="0.45"/><rect x="1841.4" y="788.0" width="4.3" height="86.9" rx="2" fill="#c9b896" opacity="0.45"/><rect x="1477.5" y="557.5" width="2.7" height="63.6" rx="2" fill="#cbbb9c" opacity="0.45"/><rect x="1550.8" y="446.0" width="4.4" height="177.7" rx="2" fill="#e9e2d4" opacity="0.45"/><rect x="1499.2" y="549.5" width="7.3" height="139.9" rx="2" fill="#e9e2d4" opacity="0.45"/><rect x="1793.0" y="440.2" width="4.2" height="113.1" rx="2" fill="#e9e2d4" opacity="0.45"/><rect x="1828.1" y="358.6" width="3.4" height="65.2" rx="2" fill="#e6dece" opacity="0.45"/><rect x="1473.5" y="793.9" width="3.7" height="66.5" rx="2" fill="#e6dece" opacity="0.45"/><rect x="1626.1" y="498.3" width="7.7" height="143.3" rx="2" fill="#d2c3a6" opacity="0.45"/><rect x="1825.3" y="681.2" width="4.7" height="178.0" rx="2" fill="#d2c3a6" opacity="0.45"/><rect x="1616.1" y="517.3" width="5.8" height="50.7" rx="2" fill="#cbbb9c" opacity="0.45"/><rect x="1540.5" y="892.2" width="2.7" height="118.1" rx="2" fill="#d2c3a6" opacity="0.45"/><rect x="1488.7" y="262.1" width="2.6" height="60.3" rx="2" fill="#c9b896" opacity="0.45"/><rect x="1699.2" y="307.0" width="4.3" height="71.6" rx="2" fill="#c9b896" opacity="0.45"/><rect x="1827.3" y="647.5" width="2.7" height="124.8" rx="2" fill="#e9e2d4" opacity="0.45"/><rect x="1841.4" y="560.2" width="2.5" height="126.8" rx="2" fill="#cbbb9c" opacity="0.45"/><rect x="1750.1" y="735.8" width="6.2" height="125.7" rx="2" fill="#d2c3a6" opacity="0.45"/><rect x="1477.7" y="870.6" width="2.9" height="135.7" rx="2" fill="#d2c3a6" opacity="0.45"/><rect x="1811.8" y="747.2" width="5.9" height="89.6" rx="2" fill="#cbbb9c" opacity="0.45"/><rect x="1730.1" y="429.1" width="3.0" height="103.3" rx="2" fill="#e6dece" opacity="0.45"/><rect x="1668.7" y="760.6" width="3.3" height="95.9" rx="2" fill="#e6dece" opacity="0.45"/><rect x="1771.3" y="785.7" width="3.4" height="178.0" rx="2" fill="#d2c3a6" opacity="0.45"/><rect x="1653.8" y="729.8" width="6.7" height="227.9" rx="2" fill="#e9e2d4" opacity="0.45"/><rect x="1566.2" y="705.2" width="4.7" height="221.3" rx="2" fill="#c9b896" opacity="0.45"/><rect x="1827.1" y="495.4" width="3.4" height="74.1" rx="2" fill="#e6dece" opacity="0.45"/><rect x="1595.7" y="570.9" width="5.7" height="227.0" rx="2" fill="#cbbb9c" opacity="0.45"/><rect x="1648.8" y="679.9" width="2.5" height="189.9" rx="2" fill="#cbbb9c" opacity="0.45"/><rect x="1810.2" y="762.7" width="4.9" height="180.0" rx="2" fill="#e6dece" opacity="0.45"/><rect x="1631.7" y="668.9" width="7.7" height="47.3" rx="2" fill="#e9e2d4" opacity="0.45"/><rect x="1642.7" y="737.7" width="3.0" height="47.0" rx="2" fill="#e6dece" opacity="0.45"/><rect x="1479.3" y="640.1" width="5.9" height="123.1" rx="2" fill="#d2c3a6" opacity="0.45"/><rect x="1778.9" y="889.4" width="4.1" height="161.5" rx="2" fill="#d2c3a6" opacity="0.45"/><rect x="1674.6" y="275.7" width="6.4" height="189.9" rx="2" fill="#cbbb9c" opacity="0.45"/><rect x="1666.5" y="859.5" width="7.2" height="116.8" rx="2" fill="#e6dece" opacity="0.45"/><rect x="1479.5" y="398.2" width="6.6" height="130.2" rx="2" fill="#c9b896" opacity="0.45"/><rect x="1566.3" y="530.2" width="7.5" height="56.2" rx="2" fill="#c9b896" opacity="0.45"/><rect x="1805.6" y="686.0" width="5.1" height="193.0" rx="2" fill="#d2c3a6" opacity="0.45"/><rect x="1518.0" y="359.2" width="7.2" height="132.1" rx="2" fill="#e6dece" opacity="0.45"/><rect x="1697.2" y="758.7" width="2.8" height="60.0" rx="2" fill="#d2c3a6" opacity="0.45"/><rect x="1740.9" y="618.1" width="5.1" height="95.2" rx="2" fill="#d2c3a6" opacity="0.45"/><rect x="1649.9" y="759.0" width="2.3" height="206.6" rx="2" fill="#e6dece" opacity="0.45"/><rect x="1572.8" y="756.2" width="5.4" height="131.5" rx="2" fill="#cbbb9c" opacity="0.45"/><rect x="1635.2" y="654.0" width="5.1" height="131.1" rx="2" fill="#c9b896" opacity="0.45"/><rect x="1638.6" y="603.3" width="7.6" height="125.6" rx="2" fill="#d2c3a6" opacity="0.45"/><rect x="1797.7" y="865.0" width="5.4" height="81.9" rx="2" fill="#e6dece" opacity="0.45"/><rect x="1784.0" y="349.8" width="4.7" height="54.3" rx="2" fill="#cbbb9c" opacity="0.45"/><rect x="1720.7" y="536.1" width="3.8" height="72.5" rx="2" fill="#cbbb9c" opacity="0.45"/><rect x="1805.4" y="360.8" width="6.0" height="173.2" rx="2" fill="#e6dece" opacity="0.45"/><rect x="1563.9" y="349.8" width="6.5" height="123.5" rx="2" fill="#cbbb9c" opacity="0.45"/><rect x="1618.3" y="573.8" width="7.0" height="228.0" rx="2" fill="#e6dece" opacity="0.45"/><rect x="1733.9" y="898.2" width="4.5" height="110.8" rx="2" fill="#c9b896" opacity="0.45"/><rect x="1588.4" y="724.2" width="5.3" height="33.9" rx="2" fill="#e9e2d4" opacity="0.45"/><rect x="1732.7" y="508.0" width="3.8" height="133.5" rx="2" fill="#cbbb9c" opacity="0.45"/><rect x="1511.3" y="849.9" width="7.3" height="75.7" rx="2" fill="#cbbb9c" opacity="0.45"/><rect x="1568.6" y="287.3" width="3.6" height="185.8" rx="2" fill="#e6dece" opacity="0.45"/><rect x="1776.4" y="805.7" width="7.7" height="165.2" rx="2" fill="#e9e2d4" opacity="0.45"/><path d="M1636 262 Q1646 290 1645 306 Q1650 316 1658 312 Q1662 300 1663 285 Q1664 272 1668 262 Z" fill="#c49a64" opacity="0.6"/><path d="M1655 262 Q1660 280 1657 295 L1663 290 Q1664 275 1667 262 Z" fill="#b88850" opacity="0.5"/><ellipse cx="1634" cy="432" rx="15" ry="15" fill="#a58672" opacity="0.8"/><ellipse cx="1636" cy="428" rx="10" ry="9" fill="#7e5444" opacity="0.85"/><ellipse cx="1547" cy="560" rx="5" ry="5" fill="#b88a64" opacity="0.8"/><ellipse cx="1660" cy="880" rx="35" ry="40" fill="none" stroke="#d2bfa0" stroke-width="6" opacity="0.5"/><ellipse cx="1835" cy="630" rx="5" ry="30" fill="#c8b48e" opacity="0.6"/><path d="M1471.2 312.5 V308.7 Q1471.2 305.2 1474.7 305.2 H1478.5 M1541.8 312.5 V308.7 Q1541.8 305.2 1538.3 305.2 H1534.5 M1546.2 312.5 V308.7 Q1546.2 305.2 1549.7 305.2 H1553.5 M1616.8 312.5 V308.7 Q1616.8 305.2 1613.3 305.2 H1609.5 M1621.2 312.5 V308.7 Q1621.2 305.2 1624.7 305.2 H1628.5 M1691.8 312.5 V308.7 Q1691.8 305.2 1688.3 305.2 H1684.5 M1696.2 312.5 V308.7 Q1696.2 305.2 1699.7 305.2 H1703.5 M1766.8 312.5 V308.7 Q1766.8 305.2 1763.3 305.2 H1759.5 M1771.2 312.5 V308.7 Q1771.2 305.2 1774.7 305.2 H1778.5 M1841.8 312.5 V308.7 Q1841.8 305.2 1838.3 305.2 H1834.5 M1471.2 368.5 V372.3 Q1471.2 375.8 1474.7 375.8 H1478.5 M1471.2 387.5 V383.7 Q1471.2 380.2 1474.7 380.2 H1478.5 M1541.8 368.5 V372.3 Q1541.8 375.8 1538.3 375.8 H1534.5 M1546.2 368.5 V372.3 Q1546.2 375.8 1549.7 375.8 H1553.5 M1541.8 387.5 V383.7 Q1541.8 380.2 1538.3 380.2 H1534.5 M1546.2 387.5 V383.7 Q1546.2 380.2 1549.7 380.2 H1553.5 M1616.8 368.5 V372.3 Q1616.8 375.8 1613.3 375.8 H1609.5 M1621.2 368.5 V372.3 Q1621.2 375.8 1624.7 375.8 H1628.5 M1616.8 387.5 V383.7 Q1616.8 380.2 1613.3 380.2 H1609.5 M1621.2 387.5 V383.7 Q1621.2 380.2 1624.7 380.2 H1628.5 M1691.8 368.5 V372.3 Q1691.8 375.8 1688.3 375.8 H1684.5 M1696.2 368.5 V372.3 Q1696.2 375.8 1699.7 375.8 H1703.5 M1691.8 387.5 V383.7 Q1691.8 380.2 1688.3 380.2 H1684.5 M1696.2 387.5 V383.7 Q1696.2 380.2 1699.7 380.2 H1703.5 M1766.8 368.5 V372.3 Q1766.8 375.8 1763.3 375.8 H1759.5 M1771.2 368.5 V372.3 Q1771.2 375.8 1774.7 375.8 H1778.5 M1766.8 387.5 V383.7 Q1766.8 380.2 1763.3 380.2 H1759.5 M1771.2 387.5 V383.7 Q1771.2 380.2 1774.7 380.2 H1778.5 M1841.8 368.5 V372.3 Q1841.8 375.8 1838.3 375.8 H1834.5 M1841.8 387.5 V383.7 Q1841.8 380.2 1838.3 380.2 H1834.5 M1471.2 443.5 V447.3 Q1471.2 450.8 1474.7 450.8 H1478.5 M1471.2 462.5 V458.7 Q1471.2 455.2 1474.7 455.2 H1478.5 M1541.8 443.5 V447.3 Q1541.8 450.8 1538.3 450.8 H1534.5 M1546.2 443.5 V447.3 Q1546.2 450.8 1549.7 450.8 H1553.5 M1541.8 462.5 V458.7 Q1541.8 455.2 1538.3 455.2 H1534.5 M1546.2 462.5 V458.7 Q1546.2 455.2 1549.7 455.2 H1553.5 M1616.8 443.5 V447.3 Q1616.8 450.8 1613.3 450.8 H1609.5 M1621.2 443.5 V447.3 Q1621.2 450.8 1624.7 450.8 H1628.5 M1616.8 462.5 V458.7 Q1616.8 455.2 1613.3 455.2 H1609.5 M1621.2 462.5 V458.7 Q1621.2 455.2 1624.7 455.2 H1628.5 M1691.8 443.5 V447.3 Q1691.8 450.8 1688.3 450.8 H1684.5 M1696.2 443.5 V447.3 Q1696.2 450.8 1699.7 450.8 H1703.5 M1691.8 462.5 V458.7 Q1691.8 455.2 1688.3 455.2 H1684.5 M1696.2 462.5 V458.7 Q1696.2 455.2 1699.7 455.2 H1703.5 M1766.8 443.5 V447.3 Q1766.8 450.8 1763.3 450.8 H1759.5 M1771.2 443.5 V447.3 Q1771.2 450.8 1774.7 450.8 H1778.5 M1766.8 462.5 V458.7 Q1766.8 455.2 1763.3 455.2 H1759.5 M1771.2 462.5 V458.7 Q1771.2 455.2 1774.7 455.2 H1778.5 M1841.8 443.5 V447.3 Q1841.8 450.8 1838.3 450.8 H1834.5 M1841.8 462.5 V458.7 Q1841.8 455.2 1838.3 455.2 H1834.5 M1471.2 518.5 V522.3 Q1471.2 525.8 1474.7 525.8 H1478.5 M1471.2 537.5 V533.7 Q1471.2 530.2 1474.7 530.2 H1478.5 M1541.8 518.5 V522.3 Q1541.8 525.8 1538.3 525.8 H1534.5 M1546.2 518.5 V522.3 Q1546.2 525.8 1549.7 525.8 H1553.5 M1541.8 537.5 V533.7 Q1541.8 530.2 1538.3 530.2 H1534.5 M1546.2 537.5 V533.7 Q1546.2 530.2 1549.7 530.2 H1553.5 M1616.8 518.5 V522.3 Q1616.8 525.8 1613.3 525.8 H1609.5 M1621.2 518.5 V522.3 Q1621.2 525.8 1624.7 525.8 H1628.5 M1616.8 537.5 V533.7 Q1616.8 530.2 1613.3 530.2 H1609.5 M1621.2 537.5 V533.7 Q1621.2 530.2 1624.7 530.2 H1628.5 M1691.8 518.5 V522.3 Q1691.8 525.8 1688.3 525.8 H1684.5 M1696.2 518.5 V522.3 Q1696.2 525.8 1699.7 525.8 H1703.5 M1691.8 537.5 V533.7 Q1691.8 530.2 1688.3 530.2 H1684.5 M1696.2 537.5 V533.7 Q1696.2 530.2 1699.7 530.2 H1703.5 M1766.8 518.5 V522.3 Q1766.8 525.8 1763.3 525.8 H1759.5 M1771.2 518.5 V522.3 Q1771.2 525.8 1774.7 525.8 H1778.5 M1766.8 537.5 V533.7 Q1766.8 530.2 1763.3 530.2 H1759.5 M1771.2 537.5 V533.7 Q1771.2 530.2 1774.7 530.2 H1778.5 M1841.8 518.5 V522.3 Q1841.8 525.8 1838.3 525.8 H1834.5 M1841.8 537.5 V533.7 Q1841.8 530.2 1838.3 530.2 H1834.5 M1471.2 593.5 V597.3 Q1471.2 600.8 1474.7 600.8 H1478.5 M1471.2 612.5 V608.7 Q1471.2 605.2 1474.7 605.2 H1478.5 M1541.8 593.5 V597.3 Q1541.8 600.8 1538.3 600.8 H1534.5 M1546.2 593.5 V597.3 Q1546.2 600.8 1549.7 600.8 H1553.5 M1541.8 612.5 V608.7 Q1541.8 605.2 1538.3 605.2 H1534.5 M1546.2 612.5 V608.7 Q1546.2 605.2 1549.7 605.2 H1553.5 M1616.8 593.5 V597.3 Q1616.8 600.8 1613.3 600.8 H1609.5 M1621.2 593.5 V597.3 Q1621.2 600.8 1624.7 600.8 H1628.5 M1616.8 612.5 V608.7 Q1616.8 605.2 1613.3 605.2 H1609.5 M1621.2 612.5 V608.7 Q1621.2 605.2 1624.7 605.2 H1628.5 M1691.8 593.5 V597.3 Q1691.8 600.8 1688.3 600.8 H1684.5 M1696.2 593.5 V597.3 Q1696.2 600.8 1699.7 600.8 H1703.5 M1691.8 612.5 V608.7 Q1691.8 605.2 1688.3 605.2 H1684.5 M1696.2 612.5 V608.7 Q1696.2 605.2 1699.7 605.2 H1703.5 M1766.8 593.5 V597.3 Q1766.8 600.8 1763.3 600.8 H1759.5 M1771.2 593.5 V597.3 Q1771.2 600.8 1774.7 600.8 H1778.5 M1766.8 612.5 V608.7 Q1766.8 605.2 1763.3 605.2 H1759.5 M1771.2 612.5 V608.7 Q1771.2 605.2 1774.7 605.2 H1778.5 M1841.8 593.5 V597.3 Q1841.8 600.8 1838.3 600.8 H1834.5 M1841.8 612.5 V608.7 Q1841.8 605.2 1838.3 605.2 H1834.5 M1471.2 668.5 V672.3 Q1471.2 675.8 1474.7 675.8 H1478.5 M1471.2 687.5 V683.7 Q1471.2 680.2 1474.7 680.2 H1478.5 M1541.8 668.5 V672.3 Q1541.8 675.8 1538.3 675.8 H1534.5 M1546.2 668.5 V672.3 Q1546.2 675.8 1549.7 675.8 H1553.5 M1541.8 687.5 V683.7 Q1541.8 680.2 1538.3 680.2 H1534.5 M1546.2 687.5 V683.7 Q1546.2 680.2 1549.7 680.2 H1553.5 M1616.8 668.5 V672.3 Q1616.8 675.8 1613.3 675.8 H1609.5 M1621.2 668.5 V672.3 Q1621.2 675.8 1624.7 675.8 H1628.5 M1616.8 687.5 V683.7 Q1616.8 680.2 1613.3 680.2 H1609.5 M1621.2 687.5 V683.7 Q1621.2 680.2 1624.7 680.2 H1628.5 M1691.8 668.5 V672.3 Q1691.8 675.8 1688.3 675.8 H1684.5 M1696.2 668.5 V672.3 Q1696.2 675.8 1699.7 675.8 H1703.5 M1691.8 687.5 V683.7 Q1691.8 680.2 1688.3 680.2 H1684.5 M1696.2 687.5 V683.7 Q1696.2 680.2 1699.7 680.2 H1703.5 M1766.8 668.5 V672.3 Q1766.8 675.8 1763.3 675.8 H1759.5 M1771.2 668.5 V672.3 Q1771.2 675.8 1774.7 675.8 H1778.5 M1766.8 687.5 V683.7 Q1766.8 680.2 1763.3 680.2 H1759.5 M1771.2 687.5 V683.7 Q1771.2 680.2 1774.7 680.2 H1778.5 M1841.8 668.5 V672.3 Q1841.8 675.8 1838.3 675.8 H1834.5 M1841.8 687.5 V683.7 Q1841.8 680.2 1838.3 680.2 H1834.5 M1471.2 743.5 V747.3 Q1471.2 750.8 1474.7 750.8 H1478.5 M1471.2 762.5 V758.7 Q1471.2 755.2 1474.7 755.2 H1478.5 M1541.8 743.5 V747.3 Q1541.8 750.8 1538.3 750.8 H1534.5 M1546.2 743.5 V747.3 Q1546.2 750.8 1549.7 750.8 H1553.5 M1541.8 762.5 V758.7 Q1541.8 755.2 1538.3 755.2 H1534.5 M1546.2 762.5 V758.7 Q1546.2 755.2 1549.7 755.2 H1553.5 M1616.8 743.5 V747.3 Q1616.8 750.8 1613.3 750.8 H1609.5 M1621.2 743.5 V747.3 Q1621.2 750.8 1624.7 750.8 H1628.5 M1616.8 762.5 V758.7 Q1616.8 755.2 1613.3 755.2 H1609.5 M1621.2 762.5 V758.7 Q1621.2 755.2 1624.7 755.2 H1628.5 M1691.8 743.5 V747.3 Q1691.8 750.8 1688.3 750.8 H1684.5 M1696.2 743.5 V747.3 Q1696.2 750.8 1699.7 750.8 H1703.5 M1691.8 762.5 V758.7 Q1691.8 755.2 1688.3 755.2 H1684.5 M1696.2 762.5 V758.7 Q1696.2 755.2 1699.7 755.2 H1703.5 M1766.8 743.5 V747.3 Q1766.8 750.8 1763.3 750.8 H1759.5 M1771.2 743.5 V747.3 Q1771.2 750.8 1774.7 750.8 H1778.5 M1766.8 762.5 V758.7 Q1766.8 755.2 1763.3 755.2 H1759.5 M1771.2 762.5 V758.7 Q1771.2 755.2 1774.7 755.2 H1778.5 M1841.8 743.5 V747.3 Q1841.8 750.8 1838.3 750.8 H1834.5 M1841.8 762.5 V758.7 Q1841.8 755.2 1838.3 755.2 H1834.5 M1471.2 818.5 V822.3 Q1471.2 825.8 1474.7 825.8 H1478.5 M1471.2 837.5 V833.7 Q1471.2 830.2 1474.7 830.2 H1478.5 M1541.8 818.5 V822.3 Q1541.8 825.8 1538.3 825.8 H1534.5 M1546.2 818.5 V822.3 Q1546.2 825.8 1549.7 825.8 H1553.5 M1541.8 837.5 V833.7 Q1541.8 830.2 1538.3 830.2 H1534.5 M1546.2 837.5 V833.7 Q1546.2 830.2 1549.7 830.2 H1553.5 M1616.8 818.5 V822.3 Q1616.8 825.8 1613.3 825.8 H1609.5 M1621.2 818.5 V822.3 Q1621.2 825.8 1624.7 825.8 H1628.5 M1616.8 837.5 V833.7 Q1616.8 830.2 1613.3 830.2 H1609.5 M1621.2 837.5 V833.7 Q1621.2 830.2 1624.7 830.2 H1628.5 M1691.8 818.5 V822.3 Q1691.8 825.8 1688.3 825.8 H1684.5 M1696.2 818.5 V822.3 Q1696.2 825.8 1699.7 825.8 H1703.5 M1691.8 837.5 V833.7 Q1691.8 830.2 1688.3 830.2 H1684.5 M1696.2 837.5 V833.7 Q1696.2 830.2 1699.7 830.2 H1703.5 M1766.8 818.5 V822.3 Q1766.8 825.8 1763.3 825.8 H1759.5 M1771.2 818.5 V822.3 Q1771.2 825.8 1774.7 825.8 H1778.5 M1766.8 837.5 V833.7 Q1766.8 830.2 1763.3 830.2 H1759.5 M1771.2 837.5 V833.7 Q1771.2 830.2 1774.7 830.2 H1778.5 M1841.8 818.5 V822.3 Q1841.8 825.8 1838.3 825.8 H1834.5 M1841.8 837.5 V833.7 Q1841.8 830.2 1838.3 830.2 H1834.5 M1471.2 893.5 V897.3 Q1471.2 900.8 1474.7 900.8 H1478.5 M1541.8 893.5 V897.3 Q1541.8 900.8 1538.3 900.8 H1534.5 M1546.2 893.5 V897.3 Q1546.2 900.8 1549.7 900.8 H1553.5 M1616.8 893.5 V897.3 Q1616.8 900.8 1613.3 900.8 H1609.5 M1621.2 893.5 V897.3 Q1621.2 900.8 1624.7 900.8 H1628.5 M1691.8 893.5 V897.3 Q1691.8 900.8 1688.3 900.8 H1684.5 M1696.2 893.5 V897.3 Q1696.2 900.8 1699.7 900.8 H1703.5 M1766.8 893.5 V897.3 Q1766.8 900.8 1763.3 900.8 H1759.5 M1771.2 893.5 V897.3 Q1771.2 900.8 1774.7 900.8 H1778.5 M1841.8 893.5 V897.3 Q1841.8 900.8 1838.3 900.8 H1834.5" stroke="#58524a" stroke-width="1.4" fill="none"/><rect x="1455" y="767" width="76" height="124" rx="9" fill="#c9c1a5" stroke="#151515" stroke-width="2"/><path d="M1469 813 H1515 A12 12 0 0 1 1527 825 M1469 845 H1500" stroke="#151515" stroke-width="1.6" fill="none"/><path d="M1731.5 303 A37.5 37.5 0 0 1 1694 340.5 M1769 340.5 A37.5 37.5 0 0 1 1806.5 378 M1469 415.5 A37.5 37.5 0 0 1 1506.5 453 M1544 415.5 H1619 M1656.5 453 A37.5 37.5 0 0 1 1694 415.5 M1694 415.5 H1769 M1769 415.5 A37.5 37.5 0 0 1 1806.5 453 M1544 490.5 H1619 M1581.5 528 A37.5 37.5 0 0 1 1619 490.5 M1656.5 453 V528 M1731.5 528 A37.5 37.5 0 0 1 1769 490.5 M1806.5 453 V528 M1506.5 528 A37.5 37.5 0 0 0 1544 565.5 M1581.5 528 V603 M1656.5 528 V603 M1731.5 528 V603 M1806.5 528 V603 M1506.5 603 V678 M1581.5 603 A37.5 37.5 0 0 0 1619 640.5 M1656.5 603 V678 M1731.5 603 V678 M1806.5 603 V640.5 M1544 715.5 H1619 M1619 715.5 H1694 M1731.5 678 V753 M1694 715.5 A37.5 37.5 0 0 0 1731.5 678 M1694 715.5 A37.5 37.5 0 0 1 1731.5 753 M1769 715.5 H1844 M1544 790.5 H1619 M1619 790.5 H1694 M1694 790.5 H1769 M1731.5 753 V828 M1506.5 828 A37.5 37.5 0 0 0 1544 865.5 M1544 865.5 H1581.5 M1656.5 865.5 H1694 M1694 865.5 A37.5 37.5 0 0 0 1731.5 828 M1769 865.5 H1844" stroke="#141414" stroke-width="26" fill="none" stroke-linecap="butt"/><circle cx="1656.5" cy="640.5" r="24.5" fill="#141414"/><circle cx="1806.5" cy="640.5" r="24.5" fill="#141414"/><circle cx="1581.5" cy="865.5" r="24.5" fill="#141414"/><circle cx="1656.5" cy="865.5" r="24.5" fill="#141414"/><path d="M1731.5 303 A37.5 37.5 0 0 1 1694 340.5 M1769 340.5 A37.5 37.5 0 0 1 1806.5 378 M1469 415.5 A37.5 37.5 0 0 1 1506.5 453 M1544 415.5 H1619 M1656.5 453 A37.5 37.5 0 0 1 1694 415.5 M1694 415.5 H1769 M1769 415.5 A37.5 37.5 0 0 1 1806.5 453 M1544 490.5 H1619 M1581.5 528 A37.5 37.5 0 0 1 1619 490.5 M1656.5 453 V528 M1731.5 528 A37.5 37.5 0 0 1 1769 490.5 M1806.5 453 V528 M1506.5 528 A37.5 37.5 0 0 0 1544 565.5 M1581.5 528 V603 M1656.5 528 V603 M1731.5 528 V603 M1806.5 528 V603 M1506.5 603 V678 M1581.5 603 A37.5 37.5 0 0 0 1619 640.5 M1656.5 603 V678 M1731.5 603 V678 M1806.5 603 V640.5 M1544 715.5 H1619 M1619 715.5 H1694 M1731.5 678 V753 M1694 715.5 A37.5 37.5 0 0 0 1731.5 678 M1694 715.5 A37.5 37.5 0 0 1 1731.5 753 M1769 715.5 H1844 M1544 790.5 H1619 M1619 790.5 H1694 M1694 790.5 H1769 M1731.5 753 V828 M1506.5 828 A37.5 37.5 0 0 0 1544 865.5 M1544 865.5 H1581.5 M1656.5 865.5 H1694 M1694 865.5 A37.5 37.5 0 0 0 1731.5 828 M1769 865.5 H1844" stroke="#ebe6da" stroke-width="21.5" fill="none" stroke-linecap="butt"/><circle cx="1656.5" cy="640.5" r="22" fill="#ebe6da"/><circle cx="1806.5" cy="640.5" r="22" fill="#ebe6da"/><circle cx="1581.5" cy="865.5" r="22" fill="#ebe6da"/><circle cx="1656.5" cy="865.5" r="22" fill="#ebe6da"/><path d="M1619 490.5 H1694" stroke="#141414" stroke-width="26" fill="none"/><path d="M1618 490.5 H1694" stroke="#ebe6da" stroke-width="21.5" fill="none"/><path d="M1619 404 V428 M1694 404 V428 M1619 479 V503 M1769 404 V428 M1619 704 V728 M1619 779 V803 M1544 854 V878 M1694 854 V878 M1570 528 H1594 M1645 603 H1669 M1720 603 H1744 M1795 528 H1819 M1720 753 H1744 M1495 678 H1519 M1720 828 H1744 M1570 603 H1594 M1645 453 H1669 M1795 603 H1819" stroke="#9c9a94" stroke-width="1" fill="none"/><polygon points="1724.3,320.7 1726.4,329.8 1735.4,332.1 1727.4,336.9 1727.9,346.1 1720.9,340.0 1712.3,343.4 1716.0,334.8 1710.1,327.7 1719.3,328.5" fill="#f5d200" stroke="#1a1a1a" stroke-width="1.5" stroke-linejoin="round"/><polygon points="1581.0,402.5 1584.6,411.1 1593.8,411.8 1586.8,417.9 1588.9,426.9 1581.0,422.1 1573.1,426.9 1575.2,417.9 1568.2,411.8 1577.4,411.1" fill="#f5d200" stroke="#1a1a1a" stroke-width="1.5" stroke-linejoin="round"/><polygon points="1731.0,401.5 1734.6,410.1 1743.8,410.8 1736.8,416.9 1738.9,425.9 1731.0,421.1 1723.1,425.9 1725.2,416.9 1718.2,410.8 1727.4,410.1" fill="#f5d200" stroke="#1a1a1a" stroke-width="1.5" stroke-linejoin="round"/><polygon points="1800.5,413.0 1801.7,422.2 1810.5,425.3 1802.1,429.3 1801.8,438.6 1795.4,431.9 1786.5,434.5 1790.9,426.3 1785.7,418.6 1794.8,420.3" fill="#f5d200" stroke="#1a1a1a" stroke-width="1.5" stroke-linejoin="round"/><polygon points="1579.8,552.6 1584.1,560.8 1593.4,560.7 1586.9,567.4 1589.9,576.2 1581.5,572.1 1574.0,577.6 1575.4,568.4 1567.8,563.0 1577.0,561.4" fill="#f5d200" stroke="#1a1a1a" stroke-width="1.5" stroke-linejoin="round"/><polygon points="1731.0,552.5 1734.6,561.1 1743.8,561.8 1736.8,567.9 1738.9,576.9 1731.0,572.1 1723.1,576.9 1725.2,567.9 1718.2,561.8 1727.4,561.1" fill="#f5d200" stroke="#1a1a1a" stroke-width="1.5" stroke-linejoin="round"/><polygon points="1805.0,552.5 1808.6,561.1 1817.8,561.8 1810.8,567.9 1812.9,576.9 1805.0,572.1 1797.1,576.9 1799.2,567.9 1792.2,561.8 1801.4,561.1" fill="#f5d200" stroke="#1a1a1a" stroke-width="1.5" stroke-linejoin="round"/><polygon points="1592.3,619.7 1594.4,628.8 1603.4,631.1 1595.4,635.9 1595.9,645.1 1588.9,639.0 1580.3,642.4 1584.0,633.8 1578.1,626.7 1587.3,627.5" fill="#f5d200" stroke="#1a1a1a" stroke-width="1.5" stroke-linejoin="round"/><polygon points="1805.0,701.5 1808.6,710.1 1817.8,710.8 1810.8,716.9 1812.9,725.9 1805.0,721.1 1797.1,725.9 1799.2,716.9 1792.2,710.8 1801.4,710.1" fill="#f5d200" stroke="#1a1a1a" stroke-width="1.5" stroke-linejoin="round"/><polygon points="1511.5,844.0 1517.2,851.3 1526.3,849.6 1521.1,857.3 1525.5,865.5 1516.6,862.9 1510.2,869.6 1509.9,860.3 1501.5,856.3 1510.3,853.2" fill="#f5d200" stroke="#1a1a1a" stroke-width="1.5" stroke-linejoin="round"/><polygon points="1725.3,843.7 1727.4,852.8 1736.4,855.1 1728.4,859.9 1728.9,869.1 1721.9,863.0 1713.3,866.4 1717.0,857.8 1711.1,850.7 1720.3,851.5" fill="#f5d200" stroke="#1a1a1a" stroke-width="1.5" stroke-linejoin="round"/><polygon points="1805.0,852.5 1808.6,861.1 1817.8,861.8 1810.8,867.9 1812.9,876.9 1805.0,872.1 1797.1,876.9 1799.2,867.9 1792.2,861.8 1801.4,861.1" fill="#f5d200" stroke="#1a1a1a" stroke-width="1.5" stroke-linejoin="round"/><polygon points="1665.0,409.5 1668.6,418.1 1677.8,418.8 1670.8,424.9 1672.9,433.9 1665.0,429.1 1657.1,433.9 1659.2,424.9 1652.2,418.8 1661.4,418.1" fill="#6a6af4" stroke="#1a1a1a" stroke-width="1.5" stroke-linejoin="round"/><polygon points="1582.0,701.5 1585.6,710.1 1594.8,710.8 1587.8,716.9 1589.9,725.9 1582.0,721.1 1574.1,725.9 1576.2,716.9 1569.2,710.8 1578.4,710.1" fill="#6a6af4" stroke="#1a1a1a" stroke-width="1.5" stroke-linejoin="round"/><polygon points="1658.0,701.5 1661.6,710.1 1670.8,710.8 1663.8,716.9 1665.9,725.9 1658.0,721.1 1650.1,725.9 1652.2,716.9 1645.2,710.8 1654.4,710.1" fill="#6a6af4" stroke="#1a1a1a" stroke-width="1.5" stroke-linejoin="round"/><polygon points="1582.0,777.5 1585.6,786.1 1594.8,786.8 1587.8,792.9 1589.9,801.9 1582.0,797.1 1574.1,801.9 1576.2,792.9 1569.2,786.8 1578.4,786.1" fill="#e81515" stroke="#1a1a1a" stroke-width="1.5" stroke-linejoin="round"/><polygon points="1658.0,777.5 1661.6,786.1 1670.8,786.8 1663.8,792.9 1665.9,801.9 1658.0,797.1 1650.1,801.9 1652.2,792.9 1645.2,786.8 1654.4,786.1" fill="#e81515" stroke="#1a1a1a" stroke-width="1.5" stroke-linejoin="round"/><path d="M1652 633 H1661 V642 H1666 L1656.5 653 L1647 642 H1652 Z" fill="#111"/><path d="M1722 629 H1741 M1722 640 H1741 M1722 651 H1741" stroke="#e81515" stroke-width="5"/><polygon points="1806.5,628.0 1808.4,635.3 1814.1,630.5 1811.4,637.5 1818.9,637.0 1812.5,641.0 1818.9,645.0 1811.4,644.5 1814.1,651.5 1808.4,646.7 1806.5,654.0 1804.6,646.7 1798.9,651.5 1801.6,644.5 1794.1,645.0 1800.5,641.0 1794.1,637.0 1801.6,637.5 1798.9,630.5 1804.6,635.3" fill="#111"/><circle cx="1806.5" cy="641" r="5.5" fill="#1546c8"/><polygon points="1656.5,853.0 1658.4,860.3 1664.1,855.5 1661.4,862.5 1668.9,862.0 1662.5,866.0 1668.9,870.0 1661.4,869.5 1664.1,876.5 1658.4,871.7 1656.5,879.0 1654.6,871.7 1648.9,876.5 1651.6,869.5 1644.1,870.0 1650.5,866.0 1644.1,862.0 1651.6,862.5 1648.9,855.5 1654.6,860.3" fill="#111"/><circle cx="1656.5" cy="866" r="5.5" fill="#d23a10"/><circle cx="1581.5" cy="866" r="10" fill="none" stroke="#111" stroke-width="2.5"/><circle cx="1581.5" cy="866" r="3" fill="#111"/><path d="M1563 866 H1600 M1581.5 848 V884" stroke="#111" stroke-width="2"/><path d="M1645 557 H1634 A10 10 0 0 0 1634 577 H1645 Z" fill="#7d76a8" stroke="#222" stroke-width="1"/><rect x="1628" y="560" width="12" height="13" fill="#f5d200" stroke="#222" stroke-width="1"/><rect x="1651" y="553" width="11" height="27" rx="5.5" fill="#fff" stroke="#111" stroke-width="1.5"/><rect x="1651" y="553" width="11" height="12" rx="5.5" fill="#111"/><rect x="1489" y="629" width="34" height="7" rx="3.5" fill="#ebe6da" stroke="#111" stroke-width="1.5"/><rect x="1493" y="638" width="34" height="7" rx="3.5" fill="#ebe6da" stroke="#111" stroke-width="1.5"/><rect x="1489" y="647" width="34" height="7" rx="3.5" fill="#ebe6da" stroke="#111" stroke-width="1.5"/><path d="M1712.2 465.4 L1726.3 479.8 L1743.1 475.9 L1745.5 482 Q1726 490 1720.5 505 L1716 503 L1719 487.6 L1704.9 472.3 Z" fill="#8580aa" stroke="#111" stroke-width="2" stroke-linejoin="round"/><path d="M1734 492.8 L1746.4 506.4" stroke="#111" stroke-width="4.5" stroke-linecap="round"/><circle cx="1708.5" cy="468.8" r="11" fill="#8580aa" stroke="#111" stroke-width="2"/><path d="M1708.5 459.5 L1717.8 468.8 L1708.5 478.1 L1699.2 468.8 Z" fill="#f5d200" stroke="#222" stroke-width="0.8"/><path d="M1487.5 592.7 L1501.3 577.6 L1518.1 582.1 L1520.1 576.9 Q1502 566 1496.8 552.3 L1490.9 554.9 L1495.5 571.1 L1480.1 585.9 Z" fill="#8580aa" stroke="#111" stroke-width="2" stroke-linejoin="round"/><path d="M1506.5 564.6 L1521.4 551" stroke="#111" stroke-width="4.5" stroke-linecap="round"/><circle cx="1483.8" cy="589.3" r="11" fill="#8580aa" stroke="#111" stroke-width="2"/><path d="M1483.8 580 L1493.1 589.3 L1483.8 598.6 L1474.5 589.3 Z" fill="#f5d200" stroke="#222" stroke-width="0.8"/><polygon points="1827.0,341.0 1823.8,343.8 1826.0,347.5 1822.0,349.2 1823.0,353.3 1818.7,353.7 1818.3,358.0 1814.2,357.0 1812.5,361.0 1808.8,358.8 1806.0,362.0 1803.2,358.8 1799.5,361.0 1797.8,357.0 1793.7,358.0 1793.3,353.7 1789.0,353.3 1790.0,349.2 1786.0,347.5 1788.2,343.8 1785.0,341.0 1788.2,338.2 1786.0,334.5 1790.0,332.8 1789.0,328.7 1793.3,328.3 1793.7,324.0 1797.8,325.0 1799.5,321.0 1803.2,323.2 1806.0,320.0 1808.8,323.2 1812.5,321.0 1814.2,325.0 1818.3,324.0 1818.7,328.3 1823.0,328.7 1822.0,332.8 1826.0,334.5 1823.8,338.2" fill="#a48c1e"/><circle cx="1806" cy="341" r="14.5" fill="#d9caa9"/><circle cx="1806" cy="341" r="14.5" fill="none" stroke="#a48c1e" stroke-width="2"/><path d="M1806 327 V355 M1792 341 H1820 M1796 331 L1816 351 M1816 331 L1796 351" stroke="#a48c1e" stroke-width="1.6"/><circle cx="1806" cy="341" r="4.5" fill="#a48c1e"/><path d="M1831 333 L1840 341 L1831 349 Z" fill="#a48c1e"/><rect x="1477" y="312" width="59" height="59" rx="14" fill="#635a80" stroke="#111" stroke-width="4"/><path d="M1498 322 L1521 341 L1498 361 Z" fill="#66ee5a"/><rect x="1552" y="312" width="59" height="59" rx="14" fill="#635a80" stroke="#111" stroke-width="4"/><polygon points="1572,317 1574.5,324 1582,324 1576,328.5 1578.3,336 1572,331.5 1565.7,336 1568,328.5 1562,324 1569.5,324" fill="#e8e3d6"/><circle cx="1591" cy="327" r="7.5" fill="#e8e3d6"/><text x="1581.5" y="358" font-family="Liberation Sans" font-weight="700" font-size="24" fill="#e8e3d6" text-anchor="middle">19</text></svg>
<div style="position:absolute;left:1474px;top:227.5px;height:30px;line-height:30px;font-family:'Liberation Sans', sans-serif;font-size:24.7px;color:#fff;font-weight:700;white-space:pre;letter-spacing:0.1px">Marble Maze Master</div>
<svg style="position:absolute;left:1797px;top:225px;" width="44" height="27" viewBox="0 0 44 27"><path d="M0 0 H9 L19 27 H10 Z M13 0 H22 L32 27 H23 Z M26 0 H35 L44 27 H35 Z" fill="#fff"/></svg>
<svg style="position:absolute;left:1776px;top:199px;" width="42" height="14" viewBox="0 0 42 14"><path d="M0 2 Q7 -2 14 2 L7 12 Z" fill="#fff"/><path d="M17 12 L28 0 V12 Z" fill="#fff"/><rect x="32" y="0" width="9" height="12" fill="#fff"/></svg>
<div style="position:absolute;left:1478px;top:950.0px;height:20px;line-height:20px;font-family:'Liberation Sans', sans-serif;font-size:15px;color:#fff;font-weight:700;white-space:pre;">Build Mode</div>
<div style="position:absolute;right:86px;top:950.0px;height:20px;line-height:20px;font-family:'Liberation Sans', sans-serif;font-size:15px;color:#fff;font-weight:700;white-space:pre;text-align:right;">Board 19</div>
<div style="position:absolute;left:1622px;top:978px;width:68px;height:3px;background:#fff;border-radius:2px"></div>
<div style="position:absolute;left:1843px;top:148.0px;height:20px;line-height:20px;font-family:'Liberation Sans', sans-serif;font-size:15px;color:#1a2244;font-weight:400;white-space:pre;">De</div>
<div style="position:absolute;left:1860px;top:145px;width:59px;height:510px;background:#f2f2f2;border:1px solid #333"></div>
<div style="position:absolute;left:1873px;top:148.0px;height:20px;line-height:20px;font-family:'Liberation Sans', sans-serif;font-size:14px;color:#7a9aaa;font-weight:400;white-space:pre;">–</div>
<svg style="position:absolute;left:1897px;top:153px;" width="10" height="10" viewBox="0 0 10 10"><path d="M0.5 0.5 L9.5 9.5 M9.5 0.5 L0.5 9.5" stroke="#6a8a9a" stroke-width="1.3"/></svg>
<svg style="position:absolute;left:1878px;top:177px;" width="22" height="22" viewBox="0 0 22 22"><path d="M6 5 A9 9 0 1 0 16 5" stroke="#5f7f8f" stroke-width="2.4" fill="none"/><path d="M11 1 V11" stroke="#5f7f8f" stroke-width="2.4"/></svg>
<svg style="position:absolute;left:1878px;top:222px;" width="22" height="22" viewBox="0 0 22 22"><path d="M6 5 A9 9 0 1 0 16 5" stroke="#5f7f8f" stroke-width="2.4" fill="none"/></svg>
<svg style="position:absolute;left:1879px;top:266px;" width="20" height="20" viewBox="0 0 20 20"><path d="M1 6 H5 L11 1 V19 L5 14 H1 Z" fill="#5f7f8f"/><path d="M13 7 Q16 10 13 13" stroke="#5f7f8f" stroke-width="2" fill="none"/></svg>
<svg style="position:absolute;left:1878px;top:310px;" width="22" height="20" viewBox="0 0 22 20"><path d="M1 4 H6 L8 1 H14 L16 4 H21 V19 H1 Z" fill="#5f7f8f"/><circle cx="11" cy="11" r="4.5" fill="#f2f2f2"/><circle cx="11" cy="11" r="2.8" fill="#5f7f8f"/></svg>
<svg style="position:absolute;left:1879px;top:355px;" width="21" height="21" viewBox="0 0 21 21"><circle cx="8" cy="8" r="6.5" stroke="#5f7f8f" stroke-width="2" fill="none"/><path d="M13 13 L20 20" stroke="#5f7f8f" stroke-width="2.6"/><path d="M8 5 V11 M5 8 H11" stroke="#5f7f8f" stroke-width="1.6"/></svg>
<svg style="position:absolute;left:1877px;top:398px;" width="24" height="22" viewBox="0 0 24 22"><path d="M12 1 L23 12 L12 23 L1 12 Z" transform="rotate(10 12 12)" stroke="#5f7f8f" stroke-width="2.2" fill="none"/><path d="M2 4 Q6 -1 12 1" stroke="#5f7f8f" stroke-width="1.6" fill="none"/></svg>
<svg style="position:absolute;left:1877px;top:442px;" width="24" height="22" viewBox="0 0 24 22"><path d="M12 1 L23 12 L12 23 L1 12 Z" transform="rotate(-10 12 12)" stroke="#5f7f8f" stroke-width="2.2" fill="none"/><path d="M22 4 Q18 -1 12 1" stroke="#5f7f8f" stroke-width="1.6" fill="none"/></svg>
<svg style="position:absolute;left:1882px;top:489px;" width="14" height="16" viewBox="0 0 14 16"><path d="M12.5 1 L1.5 8 L12.5 15 Z" stroke="#5f7f8f" stroke-width="1.8" fill="none" stroke-linejoin="round"/></svg>
<svg style="position:absolute;left:1881px;top:533px;" width="16" height="16" viewBox="0 0 16 16"><circle cx="8" cy="8" r="6.5" stroke="#5f7f8f" stroke-width="1.8" fill="none"/></svg>
<svg style="position:absolute;left:1881px;top:577px;" width="16" height="16" viewBox="0 0 16 16"><rect x="1.5" y="1.5" width="13" height="13" rx="1" stroke="#5f7f8f" stroke-width="1.8" fill="none"/></svg>
<div style="position:absolute;left:1881.5px;top:627px;width:3px;height:3px;background:#5f7f8f;border-radius:2px"></div>
<div style="position:absolute;left:1887.5px;top:627px;width:3px;height:3px;background:#5f7f8f;border-radius:2px"></div>
<div style="position:absolute;left:1893.5px;top:627px;width:3px;height:3px;background:#5f7f8f;border-radius:2px"></div>
<svg style="position:absolute;left:0;top:0" width="1920" height="1080" viewBox="0 0 1920 1080">
<path d="M1089 320.5 C1099.2 318.1 1129.5 309.9 1150.0 306.0 C1170.5 302.1 1188.7 300.7 1212.0 297.0 C1235.3 293.3 1263.2 289.0 1290.0 284.0 C1316.8 279.0 1359.2 269.8 1373.0 267.0" stroke="#c5063a" stroke-width="16" fill="none" stroke-linecap="round"/>
<path d="M1325 252 L1380 258 L1363 308" stroke="#c5063a" stroke-width="16" fill="none" stroke-linecap="round" stroke-linejoin="round"/>
<path d="M1700 204 C1688.0 204.2 1653.0 204.6 1628.0 205.0 C1603.0 205.4 1572.3 205.9 1550.0 206.5 C1527.7 207.1 1508.7 206.9 1494.0 208.5 C1479.3 210.1 1470.8 212.1 1462.0 216.0 C1453.2 219.9 1444.8 226.3 1441.0 232.0 C1437.2 237.7 1437.7 244.7 1439.0 250.0 C1440.3 255.3 1442.8 258.8 1449.0 264.0 C1455.2 269.2 1459.2 277.3 1476.0 281.0 C1492.8 284.7 1524.7 285.0 1550.0 286.0 C1575.3 287.0 1603.0 286.8 1628.0 287.0 C1653.0 287.2 1678.0 287.4 1700.0 287.5 C1722.0 287.6 1743.3 287.4 1760.0 287.4 C1776.7 287.3 1787.0 287.6 1800.0 287.2 C1813.0 286.8 1826.1 287.2 1838.0 284.8 C1849.9 282.4 1863.3 278.8 1871.5 272.5 C1879.7 266.2 1885.4 255.2 1887.0 247.0 C1888.6 238.8 1884.9 230.3 1881.0 223.0 C1877.1 215.7 1872.3 208.0 1863.8 203.0 C1855.3 198.0 1841.0 195.1 1830.0 193.0 C1819.0 190.9 1809.3 190.9 1797.6 190.5 C1785.9 190.1 1771.3 190.1 1760.0 190.5 C1748.7 190.9 1739.0 191.7 1730.0 193.0 C1721.0 194.3 1710.0 197.7 1706.0 198.6" stroke="#c5063a" stroke-width="18" fill="none" stroke-linecap="round"/>
</svg></body></html>
